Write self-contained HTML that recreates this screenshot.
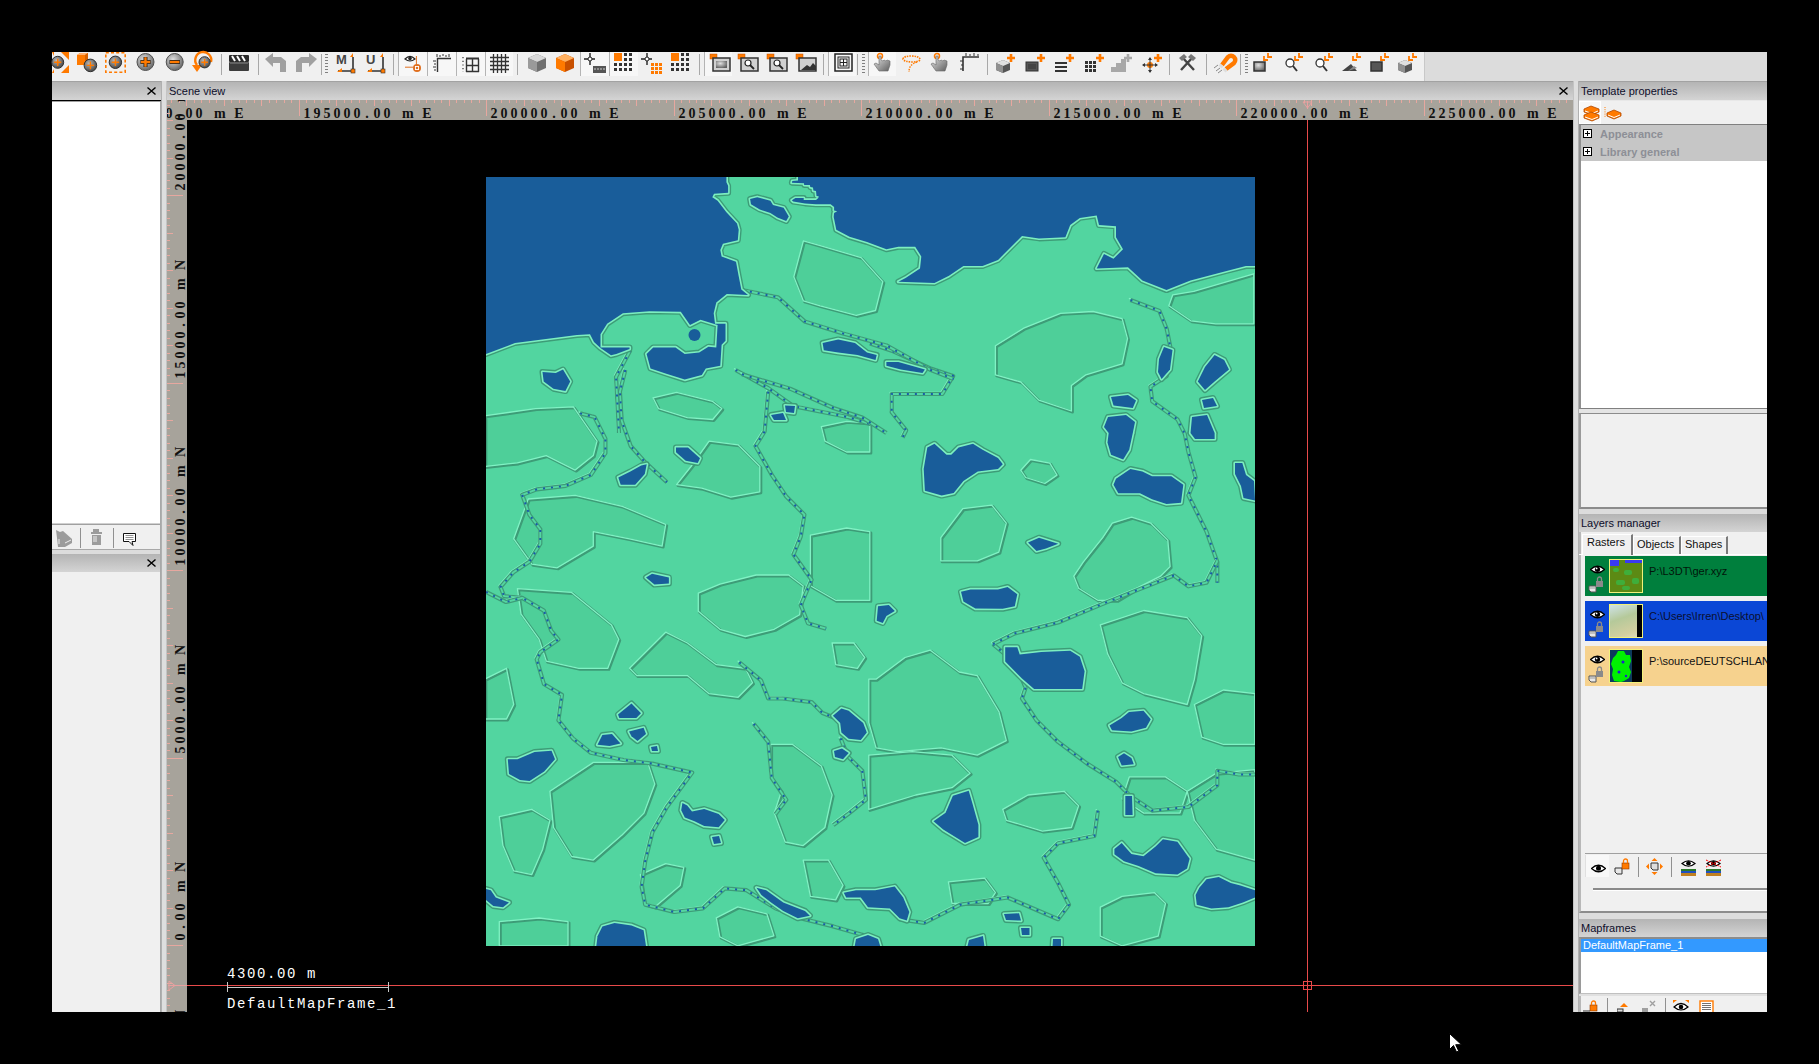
<!DOCTYPE html>
<html><head><meta charset="utf-8">
<style>
*{margin:0;padding:0;box-sizing:border-box}
html,body{width:1819px;height:1064px;background:#000;overflow:hidden;position:relative;font-family:"Liberation Sans",sans-serif;font-size:11px;color:#111}
.a{position:absolute}
.hdr{position:absolute;height:19px;background:linear-gradient(#b4b4b4,#d4d4d4);border-top:1px solid #a2a2a2}
.hdr span{position:absolute;left:2px;top:3px;font-size:11px;color:#0d0d2a;white-space:nowrap}
.x{position:absolute;width:10px;height:9px}
.rs{font-family:"Liberation Serif",serif;font-weight:bold;font-size:14px;color:#111;white-space:nowrap}
.rm{font-family:"Liberation Mono",monospace;font-weight:bold;font-size:13.5px;letter-spacing:1.9px;color:#111;white-space:nowrap}
</style></head><body>
<!-- toolbar -->
<div class="a" style="left:52px;top:52px;width:1715px;height:29px;background:#dcdcdc"></div>
<div class="a" style="left:52px;top:52px;width:1373px;height:29px;background:#f0f0f0;border-right:1px solid #c8c8c8"></div>
<svg width="0" height="0" style="position:absolute"><defs>
<radialGradient id="gc" cx="40%" cy="35%" r="70%"><stop offset="0" stop-color="#e0e0e0"/><stop offset="1" stop-color="#606060"/></radialGradient>
<radialGradient id="gd" cx="40%" cy="35%" r="70%"><stop offset="0" stop-color="#b8b8b8"/><stop offset="1" stop-color="#404040"/></radialGradient>
<linearGradient id="go" x1="0" y1="0" x2="1" y2="1"><stop offset="0" stop-color="#ffb060"/><stop offset="1" stop-color="#e06000"/></linearGradient>
<linearGradient id="gg" x1="0" y1="0" x2="1" y2="1"><stop offset="0" stop-color="#e8e8e8"/><stop offset="1" stop-color="#606060"/></linearGradient>
</defs></svg>
<div class="a" style="left:398px;top:52px;width:29px;height:24px;background:#f7f7f7;border-left:1px solid #b4b4b4"></div>
<div class="a" style="left:427px;top:52px;width:29px;height:24px;background:#f7f7f7;border-left:1px solid #b4b4b4"></div>
<div class="a" style="left:456px;top:52px;width:29px;height:24px;background:#f7f7f7;border-left:1px solid #b4b4b4"></div>
<div class="a" style="left:485px;top:52px;width:28px;height:24px;background:#f7f7f7;border-left:1px solid #b4b4b4"></div>
<div class="a" style="left:580px;top:52px;width:29px;height:24px;background:#f7f7f7;border-left:1px solid #b4b4b4"></div>
<div class="a" style="left:609px;top:52px;width:29px;height:24px;background:#f7f7f7;border-left:1px solid #b4b4b4"></div>
<div class="a" style="left:704px;top:52px;width:28px;height:24px;background:#f7f7f7;border-left:1px solid #b4b4b4"></div>
<div class="a" style="left:828px;top:52px;width:28px;height:24px;background:#f7f7f7;border-left:1px solid #b4b4b4"></div>
<div class="a" style="left:868px;top:52px;width:28px;height:24px;background:#f7f7f7;border-left:1px solid #b4b4b4"></div>
<svg class="a" style="left:52px;top:52px;overflow:visible" width="17" height="21" viewBox="0 0 17 21"><path d="M9 0h8v8z M9 21h8v-8z" fill="#ff7a00"/><path d="M0 0h2v4z M0 21h2v-4z" fill="#ff7a00"/><circle cx="5.7" cy="10.3" r="6" fill="url(#gd)" stroke="#303030" stroke-width="1"/><path d="M2.1000000000000005 10.3h7.199999999999999M5.7 6.700000000000001v7.199999999999999" stroke="#ff7a00" stroke-width="1.4"/></svg>
<svg class="a" style="left:76px;top:52px;overflow:visible" width="24" height="22" viewBox="0 0 24 22"><path d="M1 3l3-2h8v10l-3 2H1z" fill="#ff7a00"/><path d="M1 3l3-2h8l-3 2z" fill="#ffb070"/><path d="M9 3l3-2v10l-3 2z" fill="#d86000"/><circle cx="14.4" cy="13.4" r="6.3" fill="url(#gd)" stroke="#303030" stroke-width="1"/><path d="M10.620000000000001 13.4h7.56M14.4 9.620000000000001v7.56" stroke="#ff7a00" stroke-width="1.4"/></svg>
<svg class="a" style="left:105px;top:52px;overflow:visible" width="21" height="21" viewBox="0 0 21 21"><rect x="0.8" y="0.8" width="19.4" height="19.4" fill="none" stroke="#ff7a00" stroke-width="1.6" stroke-dasharray="3 2.2"/><circle cx="10.4" cy="10.3" r="6.2" fill="url(#gd)" stroke="#303030" stroke-width="1"/><path d="M6.680000000000001 10.3h7.4399999999999995M10.4 6.580000000000001v7.4399999999999995" stroke="#ff7a00" stroke-width="1.4"/></svg>
<svg class="a" style="left:136px;top:52px;overflow:visible" width="20" height="20" viewBox="0 0 20 20"><circle cx="9.5" cy="10" r="8.5" fill="url(#gc)" stroke="#505050" stroke-width="1"/><path d="M4.4 10h10.2M9.5 4.9v10.2" stroke="#202020" stroke-width="4"/><path d="M4.824999999999999 10h9.350000000000001M9.5 5.324999999999999v9.350000000000001" stroke="#ff7a00" stroke-width="2.4"/></svg>
<svg class="a" style="left:165px;top:52px;overflow:visible" width="20" height="20" viewBox="0 0 20 20"><circle cx="9.7" cy="10" r="8.5" fill="url(#gc)" stroke="#505050"/><path d="M4.5 10h10.4" stroke="#202020" stroke-width="4"/><path d="M5 10h9.4" stroke="#ff7a00" stroke-width="2.4"/></svg>
<svg class="a" style="left:191px;top:52px;overflow:visible" width="24" height="22" viewBox="0 0 24 22"><path d="M6 13 A8 8 0 1 1 20 10" fill="none" stroke="#ff7a00" stroke-width="2.4"/><path d="M1 13l5 7 5-7z" fill="#ff7a00"/><circle cx="13.6" cy="10.3" r="5.6" fill="url(#gd)" stroke="#303030" stroke-width="1"/><path d="M10.24 10.3h6.72M13.6 6.940000000000001v6.72" stroke="#ff7a00" stroke-width="1.4"/></svg>
<div class="a" style="left:221px;top:54px;width:1px;height:21px;background:#a8a8a8"></div>
<div class="a" style="left:258px;top:54px;width:1px;height:21px;background:#a8a8a8"></div>
<div class="a" style="left:321px;top:54px;width:1px;height:21px;background:#a8a8a8"></div>
<div class="a" style="left:325px;top:54px;width:3px;height:21px;background:repeating-linear-gradient(#808080 0 1px,transparent 1px 3px)"></div>
<svg class="a" style="left:228px;top:54px;overflow:visible" width="22" height="17" viewBox="0 0 22 17"><rect x="1" y="8" width="20" height="9" rx="1" fill="#3c3c3c"/><rect x="1" y="1" width="20" height="7" rx="1" fill="#2a2a2a"/><path d="M4 2l3 5M9 2l3 5M14 2l3 5" stroke="#fff" stroke-width="2"/><path d="M2 9h18" stroke="#888" stroke-width="1"/></svg>
<svg class="a" style="left:265px;top:53px;overflow:visible" width="22" height="19" viewBox="0 0 22 19"><path d="M0 6l8-6v4h8l5 4v11h-6V10H8v4z" fill="#a0a0a0"/></svg>
<svg class="a" style="left:295px;top:53px;overflow:visible" width="22" height="19" viewBox="0 0 22 19"><path d="M22 6l-8-6v4H6L1 8v11h6V10h7v4z" fill="#a0a0a0"/></svg>
<svg class="a" style="left:335px;top:53px;overflow:visible" width="22" height="20" viewBox="0 0 22 20"><text x="1" y="11" font-family="Liberation Sans" font-weight="bold" font-size="13" fill="#444">M</text><path d="M3 18h15V4" fill="none" stroke="#333" stroke-width="1.6"/><path d="M15 4l3-4v4z M2 19l5-4v4z" fill="#ff7a00"/><rect x="16" y="16" width="4" height="4" fill="#ff7a00" stroke="#333" stroke-width=".6"/></svg>
<svg class="a" style="left:365px;top:53px;overflow:visible" width="22" height="20" viewBox="0 0 22 20"><text x="1" y="11" font-family="Liberation Sans" font-weight="bold" font-size="13" fill="#444">U</text><path d="M3 18h15V4" fill="none" stroke="#333" stroke-width="1.6"/><path d="M15 4l3-4v4z M2 19l5-4v4z" fill="#ff7a00"/><rect x="16" y="16" width="4" height="4" fill="#ff7a00" stroke="#333" stroke-width=".6"/></svg>
<div class="a" style="left:393px;top:54px;width:1px;height:21px;background:#a8a8a8"></div>
<svg class="a" style="left:404px;top:54px;overflow:visible" width="18" height="19" viewBox="0 0 18 19"><path d="M1 5 Q6 0 11 5 Q6 9 1 5z" fill="#fff" stroke="#222" stroke-width="1.2"/><circle cx="6" cy="4.6" r="1.8" fill="#222"/><path d="M12.4 2v15M1 13.2h8" stroke="#e07020" stroke-width="1"/><circle cx="13" cy="14" r="4" fill="#e07020"/><path d="M11 12.5h4M11 15.5h4M11.5 12v4M14.5 12v4" stroke="#fff" stroke-width=".9"/></svg>
<svg class="a" style="left:432px;top:53px;overflow:visible" width="20" height="20" viewBox="0 0 20 20"><path d="M5.5 19V5.5H19" fill="none" stroke="#333" stroke-width="1.4"/><path d="M5 1v3M8 2v2M11 1v2M14 2v2M17 1v3M1 8h3M2 11h2M1 14h3M2 17h2" stroke="#333" stroke-width="1"/></svg>
<svg class="a" style="left:462px;top:55px;overflow:visible" width="18" height="18" viewBox="0 0 18 18"><path d="M4 3.5h13" stroke="#333" stroke-width="2"/><path d="M4.5 4v13M10.5 4v13M16.5 4v13M4 10.5h13M4 16.5h13" stroke="#333" stroke-width="1.4"/><path d="M1 2v15" stroke="#333" stroke-width="1.2" stroke-dasharray="1.2 2.5"/></svg>
<svg class="a" style="left:490px;top:54px;overflow:visible" width="19" height="19" viewBox="0 0 19 19"><path d="M0 3.5h19M0 7.5h19M0 11.5h19M0 15.5h19M3.5 0v19M7.5 0v19M11.5 0v19M15.5 0v19" stroke="#333" stroke-width="1.3"/></svg>
<div class="a" style="left:517px;top:54px;width:1px;height:21px;background:#a8a8a8"></div>
<svg class="a" style="left:527px;top:53px;overflow:visible" width="20" height="20" viewBox="0 0 20 20"><path d="M10 1l9 4v10l-9 4-9-4V5z" fill="#707070"/><path d="M10 1l9 4-9 4-9-4z" fill="#d8d8d8"/><path d="M1 5l9 4v10l-9-4z" fill="#9a9a9a"/></svg>
<svg class="a" style="left:555px;top:53px;overflow:visible" width="20" height="20" viewBox="0 0 20 20"><path d="M10 1l9 4v10l-9 4-9-4V5z" fill="#c85000"/><path d="M10 1l9 4-9 4-9-4z" fill="#ffb060"/><path d="M1 5l9 4v10l-9-4z" fill="#ff7a00"/></svg>
<svg class="a" style="left:584px;top:53px;overflow:visible" width="22" height="20" viewBox="0 0 22 20"><path d="M0 6h11M6 0v12" stroke="#222" stroke-width="1.4"/><circle cx="6" cy="6" r="2" fill="#fff" stroke="#222"/><rect x="9" y="13" width="13" height="7" fill="#555"/><path d="M10 16h11" stroke="#ccc" stroke-dasharray="2 1"/></svg>
<svg class="a" style="left:614px;top:53px;overflow:visible" width="20" height="20" viewBox="0 0 20 20"><rect x="0" y="0" width="8" height="8" fill="#ff7a00"/><rect x="10" y="0" width="3" height="3" fill="#333"/><rect x="15" y="0" width="3" height="3" fill="#333"/><rect x="10" y="5" width="3" height="3" fill="#333"/><rect x="15" y="5" width="3" height="3" fill="#333"/><rect x="0" y="10" width="3" height="3" fill="#333"/><rect x="5" y="10" width="3" height="3" fill="#333"/><rect x="10" y="10" width="3" height="3" fill="#333"/><rect x="15" y="10" width="3" height="3" fill="#333"/><rect x="0" y="15" width="3" height="3" fill="#333"/><rect x="5" y="15" width="3" height="3" fill="#333"/><rect x="10" y="15" width="3" height="3" fill="#333"/><rect x="15" y="15" width="3" height="3" fill="#333"/></svg>
<svg class="a" style="left:641px;top:53px;overflow:visible" width="21" height="21" viewBox="0 0 21 21"><path d="M0 6h11M6 0v12" stroke="#222" stroke-width="1.4"/><circle cx="6" cy="6" r="2" fill="#fff" stroke="#222"/><rect x="10" y="10" width="3" height="3" fill="#ff7a00"/><rect x="14" y="10" width="3" height="3" fill="#ff7a00"/><rect x="18" y="10" width="3" height="3" fill="#ff7a00"/><rect x="10" y="14" width="3" height="3" fill="#ff7a00"/><rect x="14" y="14" width="3" height="3" fill="#ff7a00"/><rect x="18" y="14" width="3" height="3" fill="#ff7a00"/><rect x="10" y="18" width="3" height="3" fill="#ff7a00"/><rect x="14" y="18" width="3" height="3" fill="#ff7a00"/><rect x="18" y="18" width="3" height="3" fill="#ff7a00"/></svg>
<svg class="a" style="left:671px;top:53px;overflow:visible" width="20" height="20" viewBox="0 0 20 20"><rect x="0" y="0" width="8" height="8" fill="#ff7a00"/><rect x="10" y="0" width="3" height="3" fill="#333"/><rect x="15" y="0" width="3" height="3" fill="#333"/><rect x="10" y="5" width="3" height="3" fill="#333"/><rect x="15" y="5" width="3" height="3" fill="#333"/><rect x="0" y="10" width="3" height="3" fill="#333"/><rect x="5" y="10" width="3" height="3" fill="#333"/><rect x="10" y="10" width="3" height="3" fill="#333"/><rect x="15" y="10" width="3" height="3" fill="#333"/><rect x="0" y="15" width="3" height="3" fill="#333"/><rect x="5" y="15" width="3" height="3" fill="#333"/><rect x="10" y="15" width="3" height="3" fill="#333"/><rect x="15" y="15" width="3" height="3" fill="#333"/></svg>
<div class="a" style="left:699px;top:54px;width:1px;height:21px;background:#a8a8a8"></div>
<svg class="a" style="left:709px;top:53px;overflow:visible" width="22" height="20" viewBox="0 0 22 20"><rect x="1" y="1" width="7" height="5" fill="#ff7a00" stroke="#c05000" stroke-width=".5"/><rect x="4" y="5" width="17" height="13" fill="#d0d0d0" stroke="#333" stroke-width="1.5"/><rect x="7" y="8" width="11" height="7" fill="url(#gc)"/></svg>
<svg class="a" style="left:737px;top:53px;overflow:visible" width="22" height="20" viewBox="0 0 22 20"><rect x="1" y="1" width="7" height="5" fill="#ff7a00" stroke="#c05000" stroke-width=".5"/><rect x="4" y="5" width="17" height="13" fill="#d0d0d0" stroke="#333" stroke-width="1.5"/><circle cx="11" cy="10" r="3" fill="#fff" stroke="#222" stroke-width="1.2"/><path d="M13 12l4 4" stroke="#222" stroke-width="1.8"/></svg>
<svg class="a" style="left:766px;top:53px;overflow:visible" width="22" height="20" viewBox="0 0 22 20"><rect x="1" y="1" width="7" height="5" fill="#ff7a00" stroke="#c05000" stroke-width=".5"/><rect x="4" y="5" width="17" height="13" fill="#d0d0d0" stroke="#333" stroke-width="1.5"/><circle cx="11" cy="10" r="3" fill="#fff" stroke="#222" stroke-width="1.2"/><path d="M13 12l4 4" stroke="#222" stroke-width="1.8"/></svg>
<svg class="a" style="left:795px;top:53px;overflow:visible" width="22" height="20" viewBox="0 0 22 20"><rect x="1" y="1" width="7" height="5" fill="#ff7a00" stroke="#c05000" stroke-width=".5"/><rect x="4" y="5" width="17" height="13" fill="#d0d0d0" stroke="#333" stroke-width="1.5"/><path d="M6 17l6-5 3 2 3-4 3 3v4z" fill="#333"/></svg>
<div class="a" style="left:823px;top:54px;width:1px;height:21px;background:#a8a8a8"></div>
<svg class="a" style="left:834px;top:53px;overflow:visible" width="19" height="19" viewBox="0 0 19 19"><rect x="1" y="1" width="17" height="17" fill="none" stroke="#222" stroke-width="1.5"/><rect x="4" y="4" width="11" height="11" fill="none" stroke="#222" stroke-width="1"/><rect x="6" y="6" width="7" height="7" fill="none" stroke="#222" stroke-width="1"/><path d="M9.5 6v7M6 9.5h7" stroke="#222"/></svg>
<div class="a" style="left:857px;top:54px;width:1px;height:21px;background:#a8a8a8"></div>
<div class="a" style="left:862px;top:54px;width:3px;height:21px;background:repeating-linear-gradient(#808080 0 1px,transparent 1px 3px)"></div>
<svg class="a" style="left:873px;top:53px;overflow:visible" width="20" height="20" viewBox="0 0 20 20"><circle cx="7" cy="3" r="2.5" fill="none" stroke="#ff7a00" stroke-width="1.5"/><path d="M6 3v9l-3-2-2 1 5 7h9l2-6v-4l-3-1-1 1-2-1-1 1-2-1V3z" fill="url(#gg)" stroke="#666" stroke-width=".6"/></svg>
<svg class="a" style="left:930px;top:53px;overflow:visible" width="20" height="20" viewBox="0 0 20 20"><circle cx="7" cy="3" r="2.5" fill="none" stroke="#ff7a00" stroke-width="1.5"/><path d="M6 3v9l-3-2-2 1 5 7h9l2-6v-4l-3-1-1 1-2-1-1 1-2-1V3z" fill="url(#gg)" stroke="#666" stroke-width=".6"/></svg>
<svg class="a" style="left:901px;top:53px;overflow:visible" width="21" height="20" viewBox="0 0 21 20"><path d="M2 6c0-4 16-4 17 0s-16 4-17 0z" fill="none" stroke="#ff7a00" stroke-width="1.6" stroke-dasharray="1.5 1"/><path d="M16 9c-6 2-8 5-8 10" fill="none" stroke="#ff7a00" stroke-width="1.4" stroke-dasharray="1.5 1.2"/></svg>
<svg class="a" style="left:960px;top:53px;overflow:visible" width="19" height="19" viewBox="0 0 19 19"><path d="M3 18V4h16" fill="none" stroke="#333" stroke-width="1.6"/><path d="M6 0v3M10 1v2M14 0v3M18 1v2M0 8h3M1 12h2M0 16h3" stroke="#333" stroke-width="1"/></svg>
<div class="a" style="left:987px;top:54px;width:1px;height:21px;background:#a8a8a8"></div>
<svg class="a" style="left:995px;top:53px;overflow:visible" width="22" height="20" viewBox="0 0 22 20"><path d="M8 7l7 3v7l-7 3-7-3v-7z" fill="#555"/><path d="M8 7l7 3-7 3-7-3z" fill="#e0e0e0"/><path d="M1 10l7 3v7l-7-3z" fill="#909090"/><path d="M16 1v8M12 5h8" stroke="#ff7a00" stroke-width="2.6"/></svg>
<svg class="a" style="left:1025px;top:53px;overflow:visible" width="22" height="20" viewBox="0 0 22 20"><rect x="1" y="9" width="12" height="9" fill="#555" stroke="#333"/><rect x="3" y="11" width="8" height="5" fill="#444"/><path d="M16 1v8M12 5h8" stroke="#ff7a00" stroke-width="2.6"/></svg>
<svg class="a" style="left:1054px;top:53px;overflow:visible" width="22" height="20" viewBox="0 0 22 20"><path d="M1 10h12M1 14h12M1 18h12" stroke="#333" stroke-width="1.8"/><path d="M16 1v8M12 5h8" stroke="#ff7a00" stroke-width="2.6"/></svg>
<svg class="a" style="left:1084px;top:53px;overflow:visible" width="22" height="20" viewBox="0 0 22 20"><rect x="1" y="8" width="3" height="3" fill="#333"/><rect x="5" y="8" width="3" height="3" fill="#333"/><rect x="9" y="8" width="3" height="3" fill="#333"/><rect x="1" y="12" width="3" height="3" fill="#333"/><rect x="5" y="12" width="3" height="3" fill="#333"/><rect x="9" y="12" width="3" height="3" fill="#333"/><rect x="1" y="16" width="3" height="3" fill="#333"/><rect x="5" y="16" width="3" height="3" fill="#333"/><rect x="9" y="16" width="3" height="3" fill="#333"/><path d="M16 1v8M12 5h8" stroke="#ff7a00" stroke-width="2.6"/></svg>
<svg class="a" style="left:1111px;top:53px;overflow:visible" width="22" height="20" viewBox="0 0 22 20"><path d="M0 19v-5h5v-4h5v-4h5v13z" fill="#a8a8a8"/><path d="M17 1v8M13 5h8" stroke="#a8a8a8" stroke-width="2.6"/></svg>
<svg class="a" style="left:1141px;top:53px;overflow:visible" width="22" height="21" viewBox="0 0 22 21"><circle cx="9" cy="12" r="3" fill="#ff7a00"/><path d="M9 5v14M2 12h14" stroke="#333" stroke-width="1"/><path d="M9 4l-2 3h4zM9 20l-2-3h4zM1 12l3-2v4zM17 12l-3-2v4z" fill="#333"/><path d="M17 1v8M13 5h8" stroke="#ff7a00" stroke-width="2.6"/></svg>
<div class="a" style="left:1169px;top:54px;width:1px;height:21px;background:#a8a8a8"></div>
<svg class="a" style="left:1178px;top:53px;overflow:visible" width="19" height="19" viewBox="0 0 19 19"><path d="M3 17L15 4M16 17L4 4" stroke="#444" stroke-width="2.4"/><path d="M1 5l5-4 3 3-5 4zM18 5l-5-4-3 3 5 4z" fill="#777"/></svg>
<div class="a" style="left:1206px;top:54px;width:1px;height:21px;background:#a8a8a8"></div>
<svg class="a" style="left:1213px;top:52px;overflow:visible" width="24" height="22" viewBox="0 0 24 22"><path d="M9 13l6-8a4 4 0 0 1 6 6l-8 6" fill="none" stroke="#ff7a00" stroke-width="4.5"/><path d="M9 13l-2 2M13 17l-2 2" stroke="#ddd" stroke-width="4.5"/><path d="M1 16l4-3M3 19l4-3M5 21l4-3" stroke="#888" stroke-width="1"/></svg>
<div class="a" style="left:1240px;top:54px;width:1px;height:21px;background:#a8a8a8"></div>
<div class="a" style="left:1245px;top:54px;width:3px;height:21px;background:repeating-linear-gradient(#808080 0 1px,transparent 1px 3px)"></div>
<svg class="a" style="left:1253px;top:53px;overflow:visible" width="22" height="20" viewBox="0 0 22 20"><rect x="1" y="9" width="11" height="9" fill="url(#gc)" stroke="#333" stroke-width="1.5"/><path d="M11 3v4h4M15 0v4h4" fill="none" stroke="#ff7a00" stroke-width="1.8"/></svg>
<svg class="a" style="left:1284px;top:53px;overflow:visible" width="22" height="20" viewBox="0 0 22 20"><circle cx="6" cy="10" r="4" fill="#fff" stroke="#333" stroke-width="1.3"/><path d="M9 13l4 5" stroke="#333" stroke-width="2"/><path d="M11 3v4h4M15 0v4h4" fill="none" stroke="#ff7a00" stroke-width="1.8"/></svg>
<svg class="a" style="left:1314px;top:53px;overflow:visible" width="22" height="20" viewBox="0 0 22 20"><circle cx="6" cy="10" r="4" fill="#fff" stroke="#333" stroke-width="1.3"/><path d="M9 13l4 5" stroke="#333" stroke-width="2"/><path d="M11 3v4h4M15 0v4h4" fill="none" stroke="#ff7a00" stroke-width="1.8"/></svg>
<svg class="a" style="left:1342px;top:53px;overflow:visible" width="22" height="20" viewBox="0 0 22 20"><path d="M0 18l9-7 6 7z" fill="#444"/><path d="M6 18l6-5 3 2" fill="#888"/><path d="M11 3v4h4M15 0v4h4" fill="none" stroke="#ff7a00" stroke-width="1.8"/></svg>
<svg class="a" style="left:1370px;top:53px;overflow:visible" width="22" height="20" viewBox="0 0 22 20"><rect x="1" y="9" width="11" height="9" fill="#555" stroke="#333" stroke-width="1.5"/><path d="M11 3v4h4M15 0v4h4" fill="none" stroke="#ff7a00" stroke-width="1.8"/></svg>
<svg class="a" style="left:1398px;top:53px;overflow:visible" width="22" height="20" viewBox="0 0 22 20"><path d="M7 7l7 3v7l-7 3-7-3v-7z" fill="#555"/><path d="M7 7l7 3-7 3-7-3z" fill="#e0e0e0"/><path d="M0 10l7 3v7l-7-3z" fill="#909090"/><path d="M11 3v4h4M15 0v4h4" fill="none" stroke="#ff7a00" stroke-width="1.8"/></svg>

<!-- left dock -->
<div class="hdr" style="left:52px;top:81px;width:109px"></div>
<div class="a" style="left:52px;top:101px;width:109px;height:1px;background:#a0a0a0"></div>
<div class="a" style="left:52px;top:102px;width:108px;height:421px;background:#fff"></div>
<div class="a" style="left:52px;top:523px;width:109px;height:1px;background:#d0d0d0"></div>
<div class="a" style="left:52px;top:524px;width:109px;height:1px;background:#a0a0a0"></div>
<div class="a" style="left:52px;top:525px;width:108px;height:24px;background:#f0f0f0"></div>
<div class="a" style="left:52px;top:549px;width:109px;height:1px;background:#a8a8a8"></div>
<div class="a" style="left:52px;top:550px;width:109px;height:4px;background:#dcdcdc"></div>
<div class="hdr" style="left:52px;top:554px;width:109px;height:18px;border-top:none"></div>
<div class="a" style="left:52px;top:572px;width:108px;height:440px;background:#f0f0f0"></div>
<div class="a" style="left:160px;top:102px;width:1px;height:910px;background:#a8a8a8"></div>
<!-- splitter left -->
<div class="a" style="left:161px;top:81px;width:6px;height:931px;background:#dedede;border-left:1px solid #b0b0b0;border-right:1px solid #c4c4c4"></div>

<!-- scene view -->
<div class="hdr" style="left:167px;top:81px;width:1406px"><span>Scene view</span></div>
<div class="a" style="left:167px;top:100px;width:1406px;height:20px;background:#a7a39b"></div>
<div class="a" style="left:167px;top:100px;width:20px;height:912px;background:#a7a39b"></div>
<div class="a" style="left:187px;top:120px;width:1386px;height:892px;background:#000"></div>
<div class="a" style="left:0;top:0;width:1819px;height:1064px;clip-path:inset(100px 246px 52px 167px)">
<div class="a" style="left:171px;top:100px;width:1px;height:3px;background:#e7a79f"></div>
<div class="a" style="left:179px;top:100px;width:1px;height:3px;background:#e7a79f"></div>
<div class="a" style="left:186px;top:100px;width:1px;height:6px;background:#e7a79f"></div>
<div class="a" style="left:194px;top:100px;width:1px;height:3px;background:#e7a79f"></div>
<div class="a" style="left:201px;top:100px;width:1px;height:3px;background:#e7a79f"></div>
<div class="a" style="left:209px;top:100px;width:1px;height:3px;background:#e7a79f"></div>
<div class="a" style="left:216px;top:100px;width:1px;height:3px;background:#e7a79f"></div>
<div class="a" style="left:224px;top:100px;width:1px;height:6px;background:#e7a79f"></div>
<div class="a" style="left:231px;top:100px;width:1px;height:3px;background:#e7a79f"></div>
<div class="a" style="left:239px;top:100px;width:1px;height:3px;background:#e7a79f"></div>
<div class="a" style="left:246px;top:100px;width:1px;height:3px;background:#e7a79f"></div>
<div class="a" style="left:254px;top:100px;width:1px;height:3px;background:#e7a79f"></div>
<div class="a" style="left:261px;top:100px;width:1px;height:6px;background:#e7a79f"></div>
<div class="a" style="left:269px;top:100px;width:1px;height:3px;background:#e7a79f"></div>
<div class="a" style="left:276px;top:100px;width:1px;height:3px;background:#e7a79f"></div>
<div class="a" style="left:284px;top:100px;width:1px;height:3px;background:#e7a79f"></div>
<div class="a" style="left:291px;top:100px;width:1px;height:3px;background:#e7a79f"></div>
<div class="a" style="left:299px;top:100px;width:1px;height:16px;background:#e7a79f"></div>
<div class="a" style="left:306px;top:100px;width:1px;height:3px;background:#e7a79f"></div>
<div class="a" style="left:314px;top:100px;width:1px;height:3px;background:#e7a79f"></div>
<div class="a" style="left:321px;top:100px;width:1px;height:3px;background:#e7a79f"></div>
<div class="a" style="left:329px;top:100px;width:1px;height:3px;background:#e7a79f"></div>
<div class="a" style="left:336px;top:100px;width:1px;height:6px;background:#e7a79f"></div>
<div class="a" style="left:344px;top:100px;width:1px;height:3px;background:#e7a79f"></div>
<div class="a" style="left:351px;top:100px;width:1px;height:3px;background:#e7a79f"></div>
<div class="a" style="left:359px;top:100px;width:1px;height:3px;background:#e7a79f"></div>
<div class="a" style="left:366px;top:100px;width:1px;height:3px;background:#e7a79f"></div>
<div class="a" style="left:374px;top:100px;width:1px;height:6px;background:#e7a79f"></div>
<div class="a" style="left:381px;top:100px;width:1px;height:3px;background:#e7a79f"></div>
<div class="a" style="left:389px;top:100px;width:1px;height:3px;background:#e7a79f"></div>
<div class="a" style="left:396px;top:100px;width:1px;height:3px;background:#e7a79f"></div>
<div class="a" style="left:404px;top:100px;width:1px;height:3px;background:#e7a79f"></div>
<div class="a" style="left:411px;top:100px;width:1px;height:6px;background:#e7a79f"></div>
<div class="a" style="left:419px;top:100px;width:1px;height:3px;background:#e7a79f"></div>
<div class="a" style="left:426px;top:100px;width:1px;height:3px;background:#e7a79f"></div>
<div class="a" style="left:434px;top:100px;width:1px;height:3px;background:#e7a79f"></div>
<div class="a" style="left:441px;top:100px;width:1px;height:3px;background:#e7a79f"></div>
<div class="a" style="left:449px;top:100px;width:1px;height:6px;background:#e7a79f"></div>
<div class="a" style="left:456px;top:100px;width:1px;height:3px;background:#e7a79f"></div>
<div class="a" style="left:464px;top:100px;width:1px;height:3px;background:#e7a79f"></div>
<div class="a" style="left:471px;top:100px;width:1px;height:3px;background:#e7a79f"></div>
<div class="a" style="left:479px;top:100px;width:1px;height:3px;background:#e7a79f"></div>
<div class="a" style="left:486px;top:100px;width:1px;height:16px;background:#e7a79f"></div>
<div class="a" style="left:494px;top:100px;width:1px;height:3px;background:#e7a79f"></div>
<div class="a" style="left:501px;top:100px;width:1px;height:3px;background:#e7a79f"></div>
<div class="a" style="left:509px;top:100px;width:1px;height:3px;background:#e7a79f"></div>
<div class="a" style="left:516px;top:100px;width:1px;height:3px;background:#e7a79f"></div>
<div class="a" style="left:524px;top:100px;width:1px;height:6px;background:#e7a79f"></div>
<div class="a" style="left:531px;top:100px;width:1px;height:3px;background:#e7a79f"></div>
<div class="a" style="left:539px;top:100px;width:1px;height:3px;background:#e7a79f"></div>
<div class="a" style="left:546px;top:100px;width:1px;height:3px;background:#e7a79f"></div>
<div class="a" style="left:554px;top:100px;width:1px;height:3px;background:#e7a79f"></div>
<div class="a" style="left:561px;top:100px;width:1px;height:6px;background:#e7a79f"></div>
<div class="a" style="left:569px;top:100px;width:1px;height:3px;background:#e7a79f"></div>
<div class="a" style="left:576px;top:100px;width:1px;height:3px;background:#e7a79f"></div>
<div class="a" style="left:584px;top:100px;width:1px;height:3px;background:#e7a79f"></div>
<div class="a" style="left:591px;top:100px;width:1px;height:3px;background:#e7a79f"></div>
<div class="a" style="left:599px;top:100px;width:1px;height:6px;background:#e7a79f"></div>
<div class="a" style="left:606px;top:100px;width:1px;height:3px;background:#e7a79f"></div>
<div class="a" style="left:614px;top:100px;width:1px;height:3px;background:#e7a79f"></div>
<div class="a" style="left:621px;top:100px;width:1px;height:3px;background:#e7a79f"></div>
<div class="a" style="left:629px;top:100px;width:1px;height:3px;background:#e7a79f"></div>
<div class="a" style="left:636px;top:100px;width:1px;height:6px;background:#e7a79f"></div>
<div class="a" style="left:644px;top:100px;width:1px;height:3px;background:#e7a79f"></div>
<div class="a" style="left:651px;top:100px;width:1px;height:3px;background:#e7a79f"></div>
<div class="a" style="left:659px;top:100px;width:1px;height:3px;background:#e7a79f"></div>
<div class="a" style="left:666px;top:100px;width:1px;height:3px;background:#e7a79f"></div>
<div class="a" style="left:674px;top:100px;width:1px;height:16px;background:#e7a79f"></div>
<div class="a" style="left:681px;top:100px;width:1px;height:3px;background:#e7a79f"></div>
<div class="a" style="left:689px;top:100px;width:1px;height:3px;background:#e7a79f"></div>
<div class="a" style="left:696px;top:100px;width:1px;height:3px;background:#e7a79f"></div>
<div class="a" style="left:704px;top:100px;width:1px;height:3px;background:#e7a79f"></div>
<div class="a" style="left:711px;top:100px;width:1px;height:6px;background:#e7a79f"></div>
<div class="a" style="left:719px;top:100px;width:1px;height:3px;background:#e7a79f"></div>
<div class="a" style="left:726px;top:100px;width:1px;height:3px;background:#e7a79f"></div>
<div class="a" style="left:734px;top:100px;width:1px;height:3px;background:#e7a79f"></div>
<div class="a" style="left:741px;top:100px;width:1px;height:3px;background:#e7a79f"></div>
<div class="a" style="left:749px;top:100px;width:1px;height:6px;background:#e7a79f"></div>
<div class="a" style="left:756px;top:100px;width:1px;height:3px;background:#e7a79f"></div>
<div class="a" style="left:764px;top:100px;width:1px;height:3px;background:#e7a79f"></div>
<div class="a" style="left:771px;top:100px;width:1px;height:3px;background:#e7a79f"></div>
<div class="a" style="left:779px;top:100px;width:1px;height:3px;background:#e7a79f"></div>
<div class="a" style="left:786px;top:100px;width:1px;height:6px;background:#e7a79f"></div>
<div class="a" style="left:794px;top:100px;width:1px;height:3px;background:#e7a79f"></div>
<div class="a" style="left:801px;top:100px;width:1px;height:3px;background:#e7a79f"></div>
<div class="a" style="left:809px;top:100px;width:1px;height:3px;background:#e7a79f"></div>
<div class="a" style="left:816px;top:100px;width:1px;height:3px;background:#e7a79f"></div>
<div class="a" style="left:824px;top:100px;width:1px;height:6px;background:#e7a79f"></div>
<div class="a" style="left:831px;top:100px;width:1px;height:3px;background:#e7a79f"></div>
<div class="a" style="left:839px;top:100px;width:1px;height:3px;background:#e7a79f"></div>
<div class="a" style="left:846px;top:100px;width:1px;height:3px;background:#e7a79f"></div>
<div class="a" style="left:854px;top:100px;width:1px;height:3px;background:#e7a79f"></div>
<div class="a" style="left:861px;top:100px;width:1px;height:16px;background:#e7a79f"></div>
<div class="a" style="left:869px;top:100px;width:1px;height:3px;background:#e7a79f"></div>
<div class="a" style="left:876px;top:100px;width:1px;height:3px;background:#e7a79f"></div>
<div class="a" style="left:884px;top:100px;width:1px;height:3px;background:#e7a79f"></div>
<div class="a" style="left:891px;top:100px;width:1px;height:3px;background:#e7a79f"></div>
<div class="a" style="left:899px;top:100px;width:1px;height:6px;background:#e7a79f"></div>
<div class="a" style="left:906px;top:100px;width:1px;height:3px;background:#e7a79f"></div>
<div class="a" style="left:914px;top:100px;width:1px;height:3px;background:#e7a79f"></div>
<div class="a" style="left:921px;top:100px;width:1px;height:3px;background:#e7a79f"></div>
<div class="a" style="left:929px;top:100px;width:1px;height:3px;background:#e7a79f"></div>
<div class="a" style="left:936px;top:100px;width:1px;height:6px;background:#e7a79f"></div>
<div class="a" style="left:944px;top:100px;width:1px;height:3px;background:#e7a79f"></div>
<div class="a" style="left:951px;top:100px;width:1px;height:3px;background:#e7a79f"></div>
<div class="a" style="left:959px;top:100px;width:1px;height:3px;background:#e7a79f"></div>
<div class="a" style="left:966px;top:100px;width:1px;height:3px;background:#e7a79f"></div>
<div class="a" style="left:974px;top:100px;width:1px;height:6px;background:#e7a79f"></div>
<div class="a" style="left:981px;top:100px;width:1px;height:3px;background:#e7a79f"></div>
<div class="a" style="left:989px;top:100px;width:1px;height:3px;background:#e7a79f"></div>
<div class="a" style="left:996px;top:100px;width:1px;height:3px;background:#e7a79f"></div>
<div class="a" style="left:1004px;top:100px;width:1px;height:3px;background:#e7a79f"></div>
<div class="a" style="left:1011px;top:100px;width:1px;height:6px;background:#e7a79f"></div>
<div class="a" style="left:1019px;top:100px;width:1px;height:3px;background:#e7a79f"></div>
<div class="a" style="left:1026px;top:100px;width:1px;height:3px;background:#e7a79f"></div>
<div class="a" style="left:1034px;top:100px;width:1px;height:3px;background:#e7a79f"></div>
<div class="a" style="left:1041px;top:100px;width:1px;height:3px;background:#e7a79f"></div>
<div class="a" style="left:1049px;top:100px;width:1px;height:16px;background:#e7a79f"></div>
<div class="a" style="left:1056px;top:100px;width:1px;height:3px;background:#e7a79f"></div>
<div class="a" style="left:1064px;top:100px;width:1px;height:3px;background:#e7a79f"></div>
<div class="a" style="left:1071px;top:100px;width:1px;height:3px;background:#e7a79f"></div>
<div class="a" style="left:1079px;top:100px;width:1px;height:3px;background:#e7a79f"></div>
<div class="a" style="left:1086px;top:100px;width:1px;height:6px;background:#e7a79f"></div>
<div class="a" style="left:1094px;top:100px;width:1px;height:3px;background:#e7a79f"></div>
<div class="a" style="left:1101px;top:100px;width:1px;height:3px;background:#e7a79f"></div>
<div class="a" style="left:1109px;top:100px;width:1px;height:3px;background:#e7a79f"></div>
<div class="a" style="left:1116px;top:100px;width:1px;height:3px;background:#e7a79f"></div>
<div class="a" style="left:1124px;top:100px;width:1px;height:6px;background:#e7a79f"></div>
<div class="a" style="left:1131px;top:100px;width:1px;height:3px;background:#e7a79f"></div>
<div class="a" style="left:1139px;top:100px;width:1px;height:3px;background:#e7a79f"></div>
<div class="a" style="left:1146px;top:100px;width:1px;height:3px;background:#e7a79f"></div>
<div class="a" style="left:1154px;top:100px;width:1px;height:3px;background:#e7a79f"></div>
<div class="a" style="left:1161px;top:100px;width:1px;height:6px;background:#e7a79f"></div>
<div class="a" style="left:1169px;top:100px;width:1px;height:3px;background:#e7a79f"></div>
<div class="a" style="left:1176px;top:100px;width:1px;height:3px;background:#e7a79f"></div>
<div class="a" style="left:1184px;top:100px;width:1px;height:3px;background:#e7a79f"></div>
<div class="a" style="left:1191px;top:100px;width:1px;height:3px;background:#e7a79f"></div>
<div class="a" style="left:1199px;top:100px;width:1px;height:6px;background:#e7a79f"></div>
<div class="a" style="left:1206px;top:100px;width:1px;height:3px;background:#e7a79f"></div>
<div class="a" style="left:1214px;top:100px;width:1px;height:3px;background:#e7a79f"></div>
<div class="a" style="left:1221px;top:100px;width:1px;height:3px;background:#e7a79f"></div>
<div class="a" style="left:1229px;top:100px;width:1px;height:3px;background:#e7a79f"></div>
<div class="a" style="left:1236px;top:100px;width:1px;height:16px;background:#e7a79f"></div>
<div class="a" style="left:1244px;top:100px;width:1px;height:3px;background:#e7a79f"></div>
<div class="a" style="left:1251px;top:100px;width:1px;height:3px;background:#e7a79f"></div>
<div class="a" style="left:1259px;top:100px;width:1px;height:3px;background:#e7a79f"></div>
<div class="a" style="left:1266px;top:100px;width:1px;height:3px;background:#e7a79f"></div>
<div class="a" style="left:1274px;top:100px;width:1px;height:6px;background:#e7a79f"></div>
<div class="a" style="left:1281px;top:100px;width:1px;height:3px;background:#e7a79f"></div>
<div class="a" style="left:1289px;top:100px;width:1px;height:3px;background:#e7a79f"></div>
<div class="a" style="left:1296px;top:100px;width:1px;height:3px;background:#e7a79f"></div>
<div class="a" style="left:1304px;top:100px;width:1px;height:3px;background:#e7a79f"></div>
<div class="a" style="left:1311px;top:100px;width:1px;height:6px;background:#e7a79f"></div>
<div class="a" style="left:1319px;top:100px;width:1px;height:3px;background:#e7a79f"></div>
<div class="a" style="left:1326px;top:100px;width:1px;height:3px;background:#e7a79f"></div>
<div class="a" style="left:1334px;top:100px;width:1px;height:3px;background:#e7a79f"></div>
<div class="a" style="left:1341px;top:100px;width:1px;height:3px;background:#e7a79f"></div>
<div class="a" style="left:1349px;top:100px;width:1px;height:6px;background:#e7a79f"></div>
<div class="a" style="left:1356px;top:100px;width:1px;height:3px;background:#e7a79f"></div>
<div class="a" style="left:1364px;top:100px;width:1px;height:3px;background:#e7a79f"></div>
<div class="a" style="left:1371px;top:100px;width:1px;height:3px;background:#e7a79f"></div>
<div class="a" style="left:1379px;top:100px;width:1px;height:3px;background:#e7a79f"></div>
<div class="a" style="left:1386px;top:100px;width:1px;height:6px;background:#e7a79f"></div>
<div class="a" style="left:1394px;top:100px;width:1px;height:3px;background:#e7a79f"></div>
<div class="a" style="left:1401px;top:100px;width:1px;height:3px;background:#e7a79f"></div>
<div class="a" style="left:1409px;top:100px;width:1px;height:3px;background:#e7a79f"></div>
<div class="a" style="left:1416px;top:100px;width:1px;height:3px;background:#e7a79f"></div>
<div class="a" style="left:1424px;top:100px;width:1px;height:16px;background:#e7a79f"></div>
<div class="a" style="left:1431px;top:100px;width:1px;height:3px;background:#e7a79f"></div>
<div class="a" style="left:1439px;top:100px;width:1px;height:3px;background:#e7a79f"></div>
<div class="a" style="left:1446px;top:100px;width:1px;height:3px;background:#e7a79f"></div>
<div class="a" style="left:1454px;top:100px;width:1px;height:3px;background:#e7a79f"></div>
<div class="a" style="left:1461px;top:100px;width:1px;height:6px;background:#e7a79f"></div>
<div class="a" style="left:1469px;top:100px;width:1px;height:3px;background:#e7a79f"></div>
<div class="a" style="left:1476px;top:100px;width:1px;height:3px;background:#e7a79f"></div>
<div class="a" style="left:1484px;top:100px;width:1px;height:3px;background:#e7a79f"></div>
<div class="a" style="left:1491px;top:100px;width:1px;height:3px;background:#e7a79f"></div>
<div class="a" style="left:1499px;top:100px;width:1px;height:6px;background:#e7a79f"></div>
<div class="a" style="left:1506px;top:100px;width:1px;height:3px;background:#e7a79f"></div>
<div class="a" style="left:1514px;top:100px;width:1px;height:3px;background:#e7a79f"></div>
<div class="a" style="left:1521px;top:100px;width:1px;height:3px;background:#e7a79f"></div>
<div class="a" style="left:1529px;top:100px;width:1px;height:3px;background:#e7a79f"></div>
<div class="a" style="left:1536px;top:100px;width:1px;height:6px;background:#e7a79f"></div>
<div class="a" style="left:1544px;top:100px;width:1px;height:3px;background:#e7a79f"></div>
<div class="a" style="left:1551px;top:100px;width:1px;height:3px;background:#e7a79f"></div>
<div class="a" style="left:1559px;top:100px;width:1px;height:3px;background:#e7a79f"></div>
<div class="a" style="left:1566px;top:100px;width:1px;height:3px;background:#e7a79f"></div>
<div class="a rs" style="left:114px;top:106px;height:16px;line-height:16px;width:130px"><span style="position:absolute;left:0px;top:0;width:10px;text-align:center">1</span><span style="position:absolute;left:10px;top:0;width:10px;text-align:center">9</span><span style="position:absolute;left:20px;top:0;width:10px;text-align:center">0</span><span style="position:absolute;left:30px;top:0;width:10px;text-align:center">0</span><span style="position:absolute;left:40px;top:0;width:10px;text-align:center">0</span><span style="position:absolute;left:50px;top:0;width:10px;text-align:center">0</span><span style="position:absolute;left:60px;top:0;width:10px;text-align:center">.</span><span style="position:absolute;left:70px;top:0;width:10px;text-align:center">0</span><span style="position:absolute;left:80px;top:0;width:10px;text-align:center">0</span><span style="position:absolute;left:90px;top:0;width:10px;text-align:center">&nbsp;</span><span style="position:absolute;left:100px;top:0;width:10px;text-align:center">m</span><span style="position:absolute;left:110px;top:0;width:10px;text-align:center">&nbsp;</span><span style="position:absolute;left:120px;top:0;width:10px;text-align:center">E</span></div>
<div class="a rs" style="left:302px;top:106px;height:16px;line-height:16px;width:130px"><span style="position:absolute;left:0px;top:0;width:10px;text-align:center">1</span><span style="position:absolute;left:10px;top:0;width:10px;text-align:center">9</span><span style="position:absolute;left:20px;top:0;width:10px;text-align:center">5</span><span style="position:absolute;left:30px;top:0;width:10px;text-align:center">0</span><span style="position:absolute;left:40px;top:0;width:10px;text-align:center">0</span><span style="position:absolute;left:50px;top:0;width:10px;text-align:center">0</span><span style="position:absolute;left:60px;top:0;width:10px;text-align:center">.</span><span style="position:absolute;left:70px;top:0;width:10px;text-align:center">0</span><span style="position:absolute;left:80px;top:0;width:10px;text-align:center">0</span><span style="position:absolute;left:90px;top:0;width:10px;text-align:center">&nbsp;</span><span style="position:absolute;left:100px;top:0;width:10px;text-align:center">m</span><span style="position:absolute;left:110px;top:0;width:10px;text-align:center">&nbsp;</span><span style="position:absolute;left:120px;top:0;width:10px;text-align:center">E</span></div>
<div class="a rs" style="left:489px;top:106px;height:16px;line-height:16px;width:130px"><span style="position:absolute;left:0px;top:0;width:10px;text-align:center">2</span><span style="position:absolute;left:10px;top:0;width:10px;text-align:center">0</span><span style="position:absolute;left:20px;top:0;width:10px;text-align:center">0</span><span style="position:absolute;left:30px;top:0;width:10px;text-align:center">0</span><span style="position:absolute;left:40px;top:0;width:10px;text-align:center">0</span><span style="position:absolute;left:50px;top:0;width:10px;text-align:center">0</span><span style="position:absolute;left:60px;top:0;width:10px;text-align:center">.</span><span style="position:absolute;left:70px;top:0;width:10px;text-align:center">0</span><span style="position:absolute;left:80px;top:0;width:10px;text-align:center">0</span><span style="position:absolute;left:90px;top:0;width:10px;text-align:center">&nbsp;</span><span style="position:absolute;left:100px;top:0;width:10px;text-align:center">m</span><span style="position:absolute;left:110px;top:0;width:10px;text-align:center">&nbsp;</span><span style="position:absolute;left:120px;top:0;width:10px;text-align:center">E</span></div>
<div class="a rs" style="left:677px;top:106px;height:16px;line-height:16px;width:130px"><span style="position:absolute;left:0px;top:0;width:10px;text-align:center">2</span><span style="position:absolute;left:10px;top:0;width:10px;text-align:center">0</span><span style="position:absolute;left:20px;top:0;width:10px;text-align:center">5</span><span style="position:absolute;left:30px;top:0;width:10px;text-align:center">0</span><span style="position:absolute;left:40px;top:0;width:10px;text-align:center">0</span><span style="position:absolute;left:50px;top:0;width:10px;text-align:center">0</span><span style="position:absolute;left:60px;top:0;width:10px;text-align:center">.</span><span style="position:absolute;left:70px;top:0;width:10px;text-align:center">0</span><span style="position:absolute;left:80px;top:0;width:10px;text-align:center">0</span><span style="position:absolute;left:90px;top:0;width:10px;text-align:center">&nbsp;</span><span style="position:absolute;left:100px;top:0;width:10px;text-align:center">m</span><span style="position:absolute;left:110px;top:0;width:10px;text-align:center">&nbsp;</span><span style="position:absolute;left:120px;top:0;width:10px;text-align:center">E</span></div>
<div class="a rs" style="left:864px;top:106px;height:16px;line-height:16px;width:130px"><span style="position:absolute;left:0px;top:0;width:10px;text-align:center">2</span><span style="position:absolute;left:10px;top:0;width:10px;text-align:center">1</span><span style="position:absolute;left:20px;top:0;width:10px;text-align:center">0</span><span style="position:absolute;left:30px;top:0;width:10px;text-align:center">0</span><span style="position:absolute;left:40px;top:0;width:10px;text-align:center">0</span><span style="position:absolute;left:50px;top:0;width:10px;text-align:center">0</span><span style="position:absolute;left:60px;top:0;width:10px;text-align:center">.</span><span style="position:absolute;left:70px;top:0;width:10px;text-align:center">0</span><span style="position:absolute;left:80px;top:0;width:10px;text-align:center">0</span><span style="position:absolute;left:90px;top:0;width:10px;text-align:center">&nbsp;</span><span style="position:absolute;left:100px;top:0;width:10px;text-align:center">m</span><span style="position:absolute;left:110px;top:0;width:10px;text-align:center">&nbsp;</span><span style="position:absolute;left:120px;top:0;width:10px;text-align:center">E</span></div>
<div class="a rs" style="left:1052px;top:106px;height:16px;line-height:16px;width:130px"><span style="position:absolute;left:0px;top:0;width:10px;text-align:center">2</span><span style="position:absolute;left:10px;top:0;width:10px;text-align:center">1</span><span style="position:absolute;left:20px;top:0;width:10px;text-align:center">5</span><span style="position:absolute;left:30px;top:0;width:10px;text-align:center">0</span><span style="position:absolute;left:40px;top:0;width:10px;text-align:center">0</span><span style="position:absolute;left:50px;top:0;width:10px;text-align:center">0</span><span style="position:absolute;left:60px;top:0;width:10px;text-align:center">.</span><span style="position:absolute;left:70px;top:0;width:10px;text-align:center">0</span><span style="position:absolute;left:80px;top:0;width:10px;text-align:center">0</span><span style="position:absolute;left:90px;top:0;width:10px;text-align:center">&nbsp;</span><span style="position:absolute;left:100px;top:0;width:10px;text-align:center">m</span><span style="position:absolute;left:110px;top:0;width:10px;text-align:center">&nbsp;</span><span style="position:absolute;left:120px;top:0;width:10px;text-align:center">E</span></div>
<div class="a rs" style="left:1239px;top:106px;height:16px;line-height:16px;width:130px"><span style="position:absolute;left:0px;top:0;width:10px;text-align:center">2</span><span style="position:absolute;left:10px;top:0;width:10px;text-align:center">2</span><span style="position:absolute;left:20px;top:0;width:10px;text-align:center">0</span><span style="position:absolute;left:30px;top:0;width:10px;text-align:center">0</span><span style="position:absolute;left:40px;top:0;width:10px;text-align:center">0</span><span style="position:absolute;left:50px;top:0;width:10px;text-align:center">0</span><span style="position:absolute;left:60px;top:0;width:10px;text-align:center">.</span><span style="position:absolute;left:70px;top:0;width:10px;text-align:center">0</span><span style="position:absolute;left:80px;top:0;width:10px;text-align:center">0</span><span style="position:absolute;left:90px;top:0;width:10px;text-align:center">&nbsp;</span><span style="position:absolute;left:100px;top:0;width:10px;text-align:center">m</span><span style="position:absolute;left:110px;top:0;width:10px;text-align:center">&nbsp;</span><span style="position:absolute;left:120px;top:0;width:10px;text-align:center">E</span></div>
<div class="a rs" style="left:1427px;top:106px;height:16px;line-height:16px;width:130px"><span style="position:absolute;left:0px;top:0;width:10px;text-align:center">2</span><span style="position:absolute;left:10px;top:0;width:10px;text-align:center">2</span><span style="position:absolute;left:20px;top:0;width:10px;text-align:center">5</span><span style="position:absolute;left:30px;top:0;width:10px;text-align:center">0</span><span style="position:absolute;left:40px;top:0;width:10px;text-align:center">0</span><span style="position:absolute;left:50px;top:0;width:10px;text-align:center">0</span><span style="position:absolute;left:60px;top:0;width:10px;text-align:center">.</span><span style="position:absolute;left:70px;top:0;width:10px;text-align:center">0</span><span style="position:absolute;left:80px;top:0;width:10px;text-align:center">0</span><span style="position:absolute;left:90px;top:0;width:10px;text-align:center">&nbsp;</span><span style="position:absolute;left:100px;top:0;width:10px;text-align:center">m</span><span style="position:absolute;left:110px;top:0;width:10px;text-align:center">&nbsp;</span><span style="position:absolute;left:120px;top:0;width:10px;text-align:center">E</span></div>
<div class="a" style="left:167px;top:1005px;width:3px;height:1px;background:#e7a79f"></div>
<div class="a" style="left:167px;top:998px;width:3px;height:1px;background:#e7a79f"></div>
<div class="a" style="left:167px;top:990px;width:3px;height:1px;background:#e7a79f"></div>
<div class="a" style="left:167px;top:983px;width:6px;height:1px;background:#e7a79f"></div>
<div class="a" style="left:167px;top:975px;width:3px;height:1px;background:#e7a79f"></div>
<div class="a" style="left:167px;top:968px;width:3px;height:1px;background:#e7a79f"></div>
<div class="a" style="left:167px;top:960px;width:3px;height:1px;background:#e7a79f"></div>
<div class="a" style="left:167px;top:953px;width:3px;height:1px;background:#e7a79f"></div>
<div class="a" style="left:167px;top:945px;width:16px;height:1px;background:#e7a79f"></div>
<div class="a" style="left:167px;top:938px;width:3px;height:1px;background:#e7a79f"></div>
<div class="a" style="left:167px;top:930px;width:3px;height:1px;background:#e7a79f"></div>
<div class="a" style="left:167px;top:923px;width:3px;height:1px;background:#e7a79f"></div>
<div class="a" style="left:167px;top:915px;width:3px;height:1px;background:#e7a79f"></div>
<div class="a" style="left:167px;top:908px;width:6px;height:1px;background:#e7a79f"></div>
<div class="a" style="left:167px;top:900px;width:3px;height:1px;background:#e7a79f"></div>
<div class="a" style="left:167px;top:893px;width:3px;height:1px;background:#e7a79f"></div>
<div class="a" style="left:167px;top:885px;width:3px;height:1px;background:#e7a79f"></div>
<div class="a" style="left:167px;top:878px;width:3px;height:1px;background:#e7a79f"></div>
<div class="a" style="left:167px;top:870px;width:6px;height:1px;background:#e7a79f"></div>
<div class="a" style="left:167px;top:863px;width:3px;height:1px;background:#e7a79f"></div>
<div class="a" style="left:167px;top:855px;width:3px;height:1px;background:#e7a79f"></div>
<div class="a" style="left:167px;top:848px;width:3px;height:1px;background:#e7a79f"></div>
<div class="a" style="left:167px;top:840px;width:3px;height:1px;background:#e7a79f"></div>
<div class="a" style="left:167px;top:833px;width:6px;height:1px;background:#e7a79f"></div>
<div class="a" style="left:167px;top:825px;width:3px;height:1px;background:#e7a79f"></div>
<div class="a" style="left:167px;top:818px;width:3px;height:1px;background:#e7a79f"></div>
<div class="a" style="left:167px;top:810px;width:3px;height:1px;background:#e7a79f"></div>
<div class="a" style="left:167px;top:803px;width:3px;height:1px;background:#e7a79f"></div>
<div class="a" style="left:167px;top:795px;width:6px;height:1px;background:#e7a79f"></div>
<div class="a" style="left:167px;top:788px;width:3px;height:1px;background:#e7a79f"></div>
<div class="a" style="left:167px;top:780px;width:3px;height:1px;background:#e7a79f"></div>
<div class="a" style="left:167px;top:773px;width:3px;height:1px;background:#e7a79f"></div>
<div class="a" style="left:167px;top:765px;width:3px;height:1px;background:#e7a79f"></div>
<div class="a" style="left:167px;top:758px;width:16px;height:1px;background:#e7a79f"></div>
<div class="a" style="left:167px;top:750px;width:3px;height:1px;background:#e7a79f"></div>
<div class="a" style="left:167px;top:743px;width:3px;height:1px;background:#e7a79f"></div>
<div class="a" style="left:167px;top:735px;width:3px;height:1px;background:#e7a79f"></div>
<div class="a" style="left:167px;top:728px;width:3px;height:1px;background:#e7a79f"></div>
<div class="a" style="left:167px;top:720px;width:6px;height:1px;background:#e7a79f"></div>
<div class="a" style="left:167px;top:713px;width:3px;height:1px;background:#e7a79f"></div>
<div class="a" style="left:167px;top:705px;width:3px;height:1px;background:#e7a79f"></div>
<div class="a" style="left:167px;top:698px;width:3px;height:1px;background:#e7a79f"></div>
<div class="a" style="left:167px;top:690px;width:3px;height:1px;background:#e7a79f"></div>
<div class="a" style="left:167px;top:683px;width:6px;height:1px;background:#e7a79f"></div>
<div class="a" style="left:167px;top:675px;width:3px;height:1px;background:#e7a79f"></div>
<div class="a" style="left:167px;top:668px;width:3px;height:1px;background:#e7a79f"></div>
<div class="a" style="left:167px;top:660px;width:3px;height:1px;background:#e7a79f"></div>
<div class="a" style="left:167px;top:653px;width:3px;height:1px;background:#e7a79f"></div>
<div class="a" style="left:167px;top:645px;width:6px;height:1px;background:#e7a79f"></div>
<div class="a" style="left:167px;top:638px;width:3px;height:1px;background:#e7a79f"></div>
<div class="a" style="left:167px;top:630px;width:3px;height:1px;background:#e7a79f"></div>
<div class="a" style="left:167px;top:623px;width:3px;height:1px;background:#e7a79f"></div>
<div class="a" style="left:167px;top:615px;width:3px;height:1px;background:#e7a79f"></div>
<div class="a" style="left:167px;top:608px;width:6px;height:1px;background:#e7a79f"></div>
<div class="a" style="left:167px;top:600px;width:3px;height:1px;background:#e7a79f"></div>
<div class="a" style="left:167px;top:593px;width:3px;height:1px;background:#e7a79f"></div>
<div class="a" style="left:167px;top:585px;width:3px;height:1px;background:#e7a79f"></div>
<div class="a" style="left:167px;top:578px;width:3px;height:1px;background:#e7a79f"></div>
<div class="a" style="left:167px;top:570px;width:16px;height:1px;background:#e7a79f"></div>
<div class="a" style="left:167px;top:563px;width:3px;height:1px;background:#e7a79f"></div>
<div class="a" style="left:167px;top:555px;width:3px;height:1px;background:#e7a79f"></div>
<div class="a" style="left:167px;top:548px;width:3px;height:1px;background:#e7a79f"></div>
<div class="a" style="left:167px;top:540px;width:3px;height:1px;background:#e7a79f"></div>
<div class="a" style="left:167px;top:533px;width:6px;height:1px;background:#e7a79f"></div>
<div class="a" style="left:167px;top:525px;width:3px;height:1px;background:#e7a79f"></div>
<div class="a" style="left:167px;top:518px;width:3px;height:1px;background:#e7a79f"></div>
<div class="a" style="left:167px;top:510px;width:3px;height:1px;background:#e7a79f"></div>
<div class="a" style="left:167px;top:503px;width:3px;height:1px;background:#e7a79f"></div>
<div class="a" style="left:167px;top:495px;width:6px;height:1px;background:#e7a79f"></div>
<div class="a" style="left:167px;top:488px;width:3px;height:1px;background:#e7a79f"></div>
<div class="a" style="left:167px;top:480px;width:3px;height:1px;background:#e7a79f"></div>
<div class="a" style="left:167px;top:473px;width:3px;height:1px;background:#e7a79f"></div>
<div class="a" style="left:167px;top:465px;width:3px;height:1px;background:#e7a79f"></div>
<div class="a" style="left:167px;top:458px;width:6px;height:1px;background:#e7a79f"></div>
<div class="a" style="left:167px;top:450px;width:3px;height:1px;background:#e7a79f"></div>
<div class="a" style="left:167px;top:443px;width:3px;height:1px;background:#e7a79f"></div>
<div class="a" style="left:167px;top:435px;width:3px;height:1px;background:#e7a79f"></div>
<div class="a" style="left:167px;top:428px;width:3px;height:1px;background:#e7a79f"></div>
<div class="a" style="left:167px;top:420px;width:6px;height:1px;background:#e7a79f"></div>
<div class="a" style="left:167px;top:413px;width:3px;height:1px;background:#e7a79f"></div>
<div class="a" style="left:167px;top:405px;width:3px;height:1px;background:#e7a79f"></div>
<div class="a" style="left:167px;top:398px;width:3px;height:1px;background:#e7a79f"></div>
<div class="a" style="left:167px;top:390px;width:3px;height:1px;background:#e7a79f"></div>
<div class="a" style="left:167px;top:383px;width:16px;height:1px;background:#e7a79f"></div>
<div class="a" style="left:167px;top:375px;width:3px;height:1px;background:#e7a79f"></div>
<div class="a" style="left:167px;top:368px;width:3px;height:1px;background:#e7a79f"></div>
<div class="a" style="left:167px;top:360px;width:3px;height:1px;background:#e7a79f"></div>
<div class="a" style="left:167px;top:353px;width:3px;height:1px;background:#e7a79f"></div>
<div class="a" style="left:167px;top:345px;width:6px;height:1px;background:#e7a79f"></div>
<div class="a" style="left:167px;top:338px;width:3px;height:1px;background:#e7a79f"></div>
<div class="a" style="left:167px;top:330px;width:3px;height:1px;background:#e7a79f"></div>
<div class="a" style="left:167px;top:323px;width:3px;height:1px;background:#e7a79f"></div>
<div class="a" style="left:167px;top:315px;width:3px;height:1px;background:#e7a79f"></div>
<div class="a" style="left:167px;top:308px;width:6px;height:1px;background:#e7a79f"></div>
<div class="a" style="left:167px;top:300px;width:3px;height:1px;background:#e7a79f"></div>
<div class="a" style="left:167px;top:293px;width:3px;height:1px;background:#e7a79f"></div>
<div class="a" style="left:167px;top:285px;width:3px;height:1px;background:#e7a79f"></div>
<div class="a" style="left:167px;top:278px;width:3px;height:1px;background:#e7a79f"></div>
<div class="a" style="left:167px;top:270px;width:6px;height:1px;background:#e7a79f"></div>
<div class="a" style="left:167px;top:263px;width:3px;height:1px;background:#e7a79f"></div>
<div class="a" style="left:167px;top:255px;width:3px;height:1px;background:#e7a79f"></div>
<div class="a" style="left:167px;top:248px;width:3px;height:1px;background:#e7a79f"></div>
<div class="a" style="left:167px;top:240px;width:3px;height:1px;background:#e7a79f"></div>
<div class="a" style="left:167px;top:233px;width:6px;height:1px;background:#e7a79f"></div>
<div class="a" style="left:167px;top:225px;width:3px;height:1px;background:#e7a79f"></div>
<div class="a" style="left:167px;top:218px;width:3px;height:1px;background:#e7a79f"></div>
<div class="a" style="left:167px;top:210px;width:3px;height:1px;background:#e7a79f"></div>
<div class="a" style="left:167px;top:203px;width:3px;height:1px;background:#e7a79f"></div>
<div class="a" style="left:167px;top:195px;width:16px;height:1px;background:#e7a79f"></div>
<div class="a" style="left:167px;top:188px;width:3px;height:1px;background:#e7a79f"></div>
<div class="a" style="left:167px;top:180px;width:3px;height:1px;background:#e7a79f"></div>
<div class="a" style="left:167px;top:173px;width:3px;height:1px;background:#e7a79f"></div>
<div class="a" style="left:167px;top:165px;width:3px;height:1px;background:#e7a79f"></div>
<div class="a" style="left:167px;top:158px;width:6px;height:1px;background:#e7a79f"></div>
<div class="a" style="left:167px;top:150px;width:3px;height:1px;background:#e7a79f"></div>
<div class="a" style="left:167px;top:143px;width:3px;height:1px;background:#e7a79f"></div>
<div class="a" style="left:167px;top:135px;width:3px;height:1px;background:#e7a79f"></div>
<div class="a" style="left:167px;top:128px;width:3px;height:1px;background:#e7a79f"></div>
<div class="a" style="left:167px;top:120px;width:6px;height:1px;background:#e7a79f"></div>
<div class="a" style="left:167px;top:113px;width:3px;height:1px;background:#e7a79f"></div>
<div class="a" style="left:167px;top:105px;width:3px;height:1px;background:#e7a79f"></div>
<div class="a rs" style="left:173px;top:1130px;height:16px;line-height:16px;width:130px;transform-origin:0 0;transform:rotate(-90deg)"><span style="position:absolute;left:0px;top:0;width:10px;text-align:center">-</span><span style="position:absolute;left:10px;top:0;width:10px;text-align:center">5</span><span style="position:absolute;left:20px;top:0;width:10px;text-align:center">0</span><span style="position:absolute;left:30px;top:0;width:10px;text-align:center">0</span><span style="position:absolute;left:40px;top:0;width:10px;text-align:center">0</span><span style="position:absolute;left:50px;top:0;width:10px;text-align:center">.</span><span style="position:absolute;left:60px;top:0;width:10px;text-align:center">0</span><span style="position:absolute;left:70px;top:0;width:10px;text-align:center">0</span><span style="position:absolute;left:80px;top:0;width:10px;text-align:center">&nbsp;</span><span style="position:absolute;left:90px;top:0;width:10px;text-align:center">m</span><span style="position:absolute;left:100px;top:0;width:10px;text-align:center">&nbsp;</span><span style="position:absolute;left:110px;top:0;width:10px;text-align:center">N</span></div>
<div class="a rs" style="left:173px;top:942px;height:16px;line-height:16px;width:130px;transform-origin:0 0;transform:rotate(-90deg)"><span style="position:absolute;left:0px;top:0;width:10px;text-align:center">0</span><span style="position:absolute;left:10px;top:0;width:10px;text-align:center">.</span><span style="position:absolute;left:20px;top:0;width:10px;text-align:center">0</span><span style="position:absolute;left:30px;top:0;width:10px;text-align:center">0</span><span style="position:absolute;left:40px;top:0;width:10px;text-align:center">&nbsp;</span><span style="position:absolute;left:50px;top:0;width:10px;text-align:center">m</span><span style="position:absolute;left:60px;top:0;width:10px;text-align:center">&nbsp;</span><span style="position:absolute;left:70px;top:0;width:10px;text-align:center">N</span></div>
<div class="a rs" style="left:173px;top:755px;height:16px;line-height:16px;width:130px;transform-origin:0 0;transform:rotate(-90deg)"><span style="position:absolute;left:0px;top:0;width:10px;text-align:center">5</span><span style="position:absolute;left:10px;top:0;width:10px;text-align:center">0</span><span style="position:absolute;left:20px;top:0;width:10px;text-align:center">0</span><span style="position:absolute;left:30px;top:0;width:10px;text-align:center">0</span><span style="position:absolute;left:40px;top:0;width:10px;text-align:center">.</span><span style="position:absolute;left:50px;top:0;width:10px;text-align:center">0</span><span style="position:absolute;left:60px;top:0;width:10px;text-align:center">0</span><span style="position:absolute;left:70px;top:0;width:10px;text-align:center">&nbsp;</span><span style="position:absolute;left:80px;top:0;width:10px;text-align:center">m</span><span style="position:absolute;left:90px;top:0;width:10px;text-align:center">&nbsp;</span><span style="position:absolute;left:100px;top:0;width:10px;text-align:center">N</span></div>
<div class="a rs" style="left:173px;top:567px;height:16px;line-height:16px;width:130px;transform-origin:0 0;transform:rotate(-90deg)"><span style="position:absolute;left:0px;top:0;width:10px;text-align:center">1</span><span style="position:absolute;left:10px;top:0;width:10px;text-align:center">0</span><span style="position:absolute;left:20px;top:0;width:10px;text-align:center">0</span><span style="position:absolute;left:30px;top:0;width:10px;text-align:center">0</span><span style="position:absolute;left:40px;top:0;width:10px;text-align:center">0</span><span style="position:absolute;left:50px;top:0;width:10px;text-align:center">.</span><span style="position:absolute;left:60px;top:0;width:10px;text-align:center">0</span><span style="position:absolute;left:70px;top:0;width:10px;text-align:center">0</span><span style="position:absolute;left:80px;top:0;width:10px;text-align:center">&nbsp;</span><span style="position:absolute;left:90px;top:0;width:10px;text-align:center">m</span><span style="position:absolute;left:100px;top:0;width:10px;text-align:center">&nbsp;</span><span style="position:absolute;left:110px;top:0;width:10px;text-align:center">N</span></div>
<div class="a rs" style="left:173px;top:380px;height:16px;line-height:16px;width:130px;transform-origin:0 0;transform:rotate(-90deg)"><span style="position:absolute;left:0px;top:0;width:10px;text-align:center">1</span><span style="position:absolute;left:10px;top:0;width:10px;text-align:center">5</span><span style="position:absolute;left:20px;top:0;width:10px;text-align:center">0</span><span style="position:absolute;left:30px;top:0;width:10px;text-align:center">0</span><span style="position:absolute;left:40px;top:0;width:10px;text-align:center">0</span><span style="position:absolute;left:50px;top:0;width:10px;text-align:center">.</span><span style="position:absolute;left:60px;top:0;width:10px;text-align:center">0</span><span style="position:absolute;left:70px;top:0;width:10px;text-align:center">0</span><span style="position:absolute;left:80px;top:0;width:10px;text-align:center">&nbsp;</span><span style="position:absolute;left:90px;top:0;width:10px;text-align:center">m</span><span style="position:absolute;left:100px;top:0;width:10px;text-align:center">&nbsp;</span><span style="position:absolute;left:110px;top:0;width:10px;text-align:center">N</span></div>
<div class="a rs" style="left:173px;top:192px;height:16px;line-height:16px;width:130px;transform-origin:0 0;transform:rotate(-90deg)"><span style="position:absolute;left:0px;top:0;width:10px;text-align:center">2</span><span style="position:absolute;left:10px;top:0;width:10px;text-align:center">0</span><span style="position:absolute;left:20px;top:0;width:10px;text-align:center">0</span><span style="position:absolute;left:30px;top:0;width:10px;text-align:center">0</span><span style="position:absolute;left:40px;top:0;width:10px;text-align:center">0</span><span style="position:absolute;left:50px;top:0;width:10px;text-align:center">.</span><span style="position:absolute;left:60px;top:0;width:10px;text-align:center">0</span><span style="position:absolute;left:70px;top:0;width:10px;text-align:center">0</span><span style="position:absolute;left:80px;top:0;width:10px;text-align:center">&nbsp;</span><span style="position:absolute;left:90px;top:0;width:10px;text-align:center">m</span><span style="position:absolute;left:100px;top:0;width:10px;text-align:center">&nbsp;</span><span style="position:absolute;left:110px;top:0;width:10px;text-align:center">N</span></div>
</div>
<div id="map" class="a" style="left:486px;top:177px;width:769px;height:769px;background:#52d5a0;overflow:hidden">
<svg width="769" height="769" viewBox="0 0 769 769" style="position:absolute;left:0;top:0">
<g fill="#4ecf99" stroke="#3d9c77" stroke-width="2.6" stroke-linejoin="round">
<polygon points="0.0,240.0 50.7,232.8 88.6,231.0 112.2,265.4 108.5,279.8 90.4,294.3 61.5,279.8 32.6,287.1 0.0,290.7"/>
<polygon points="168.2,222.0 191.8,216.5 227.9,225.6 237.0,232.8 227.9,243.7 202.6,241.8 173.7,232.8"/>
<polygon points="206.2,290.7 224.3,265.4 253.3,269.0 275.0,290.7 275.0,316.0 246.0,321.4 217.0,312.4 191.8,308.8"/>
<polygon points="43.4,323.2 90.4,319.6 137.5,330.5 180.9,348.6 177.3,370.3 144.7,363.0 108.5,355.8 108.5,370.3 72.4,392.0 47.0,388.4 28.9,363.0"/>
<polygon points="336.5,250.9 361.8,245.5 385.0,247.3 385.0,276.2 361.8,276.2 340.1,265.4"/>
<polygon points="325.6,359.4 361.8,352.2 385.0,355.8 385.0,424.5 350.9,424.5 325.6,410.0"/>
<polygon points="318.6,65.0 335.4,69.8 376.3,81.8 398.0,105.9 390.7,134.7 371.5,139.6 335.4,130.0 318.6,125.1 309.0,101.0"/>
<polygon points="510.6,170.0 539.6,152.0 575.8,137.5 608.3,135.7 637.3,142.9 642.7,162.8 637.3,188.1 601.1,199.0 586.6,209.8 586.6,235.2 554.0,224.3 536.0,206.2 510.6,199.0"/>
<polygon points="688.0,119.0 709.0,115.5 745.0,105.0 769.0,98.0 769.0,148.0 731.0,148.0 706.0,145.0 684.0,130.0"/>
<polygon points="456.0,361.8 478.0,332.9 507.0,329.3 521.5,347.4 514.0,376.3 492.5,385.0 456.0,385.0"/>
<polygon points="627.5,347.4 646.8,341.4 666.0,347.4 683.0,364.3 685.3,390.8 675.7,400.4 656.4,410.0 632.3,424.5 613.1,424.5 593.8,412.4 589.0,400.4 598.6,386.0 608.3,373.9 617.9,361.9"/>
<polygon points="536.0,294.5 545.7,283.7 565.0,287.3 572.2,299.3 560.1,307.7 540.9,301.7"/>
<polygon points="65.1,615.5 108.5,586.6 162.8,586.6 170.0,608.3 159.2,637.3 137.5,659.0 108.5,684.3 86.8,680.7 68.7,651.7"/>
<polygon points="14.5,640.9 47.0,633.6 65.1,644.5 57.9,673.4 47.0,698.8 28.9,695.1 18.1,669.8"/>
<polygon points="285.8,568.5 307.5,568.5 336.5,590.2 347.3,619.2 340.1,651.7 318.4,669.8 300.3,666.2 289.4,637.3 296.7,615.5 285.8,601.1"/>
<polygon points="213.5,417.3 235.2,408.3 271.3,399.2 303.9,399.2 318.4,410.1 314.8,439.0 289.4,453.5 260.5,460.7 235.2,453.5 213.5,435.4"/>
<polygon points="32.6,412.9 86.8,416.6 126.6,449.1 133.9,463.6 123.0,492.5 94.1,492.5 61.5,485.3 54.3,463.6 36.2,438.3"/>
<polygon points="144.7,492.5 180.9,456.4 202.6,467.2 231.5,488.9 260.5,492.5 267.7,507.0 253.3,521.5 224.3,517.9 202.6,499.8 152.0,499.8"/>
<polygon points="347.3,467.2 369.0,467.2 379.9,481.7 372.6,492.5 350.9,488.9"/>
<polygon points="155.6,698.8 180.9,687.9 199.0,691.5 195.4,709.6 170.0,731.3 159.2,727.7"/>
<polygon points="318.4,684.3 343.7,684.3 358.2,709.6 350.9,724.1 325.6,720.5"/>
<polygon points="14.5,745.8 54.3,742.2 83.2,745.8 83.2,770.0 14.5,770.0"/>
<polygon points="231.5,742.0 253.0,731.0 282.0,738.0 289.0,760.0 253.0,770.0 235.0,761.0"/>
<polygon points="0.0,503.4 21.7,492.5 28.9,528.7 21.7,543.2 0.0,543.2"/>
<polygon points="391.2,503.4 420.2,481.7 445.5,474.4 474.4,496.2 492.5,499.8 514.2,536.0 521.5,564.9 492.5,579.4 456.4,572.1 412.9,575.8 391.2,572.1 384.0,546.8 384.0,503.4"/>
<polygon points="384.0,579.4 427.4,575.8 467.2,579.4 485.3,597.5 467.2,611.9 431.0,619.2 384.0,633.6"/>
<polygon points="615.5,449.1 659.0,434.7 702.4,441.9 716.9,460.0 709.6,503.4 702.4,528.7 659.0,517.9 637.3,507.0 622.8,478.1"/>
<polygon points="709.6,528.7 738.6,514.2 770.0,517.9 770.0,568.5 738.6,568.5 716.9,561.3"/>
<polygon points="702.4,615.5 731.3,597.5 770.0,593.8 770.0,684.3 731.3,673.4 709.6,644.5"/>
<polygon points="517.9,633.6 543.2,619.2 579.4,615.5 593.8,630.0 586.6,651.7 557.7,655.3 521.5,644.5"/>
<polygon points="615.5,731.3 637.3,720.5 669.8,716.9 680.7,727.7 673.4,760.3 637.3,770.0 615.5,760.3"/>
<polygon points="463.6,706.0 499.8,702.4 510.6,716.9 503.4,727.7 467.2,727.7"/>
<polygon points="644.5,601.1 680.7,601.1 702.4,615.5 695.1,637.3 659.0,637.3 637.3,622.8"/>
</g><g fill="none" stroke="#80f2c4" stroke-width="1.3" stroke-linejoin="round" transform="translate(-1.2,-1.2)">
<polygon points="0.0,240.0 50.7,232.8 88.6,231.0 112.2,265.4 108.5,279.8 90.4,294.3 61.5,279.8 32.6,287.1 0.0,290.7"/>
<polygon points="168.2,222.0 191.8,216.5 227.9,225.6 237.0,232.8 227.9,243.7 202.6,241.8 173.7,232.8"/>
<polygon points="206.2,290.7 224.3,265.4 253.3,269.0 275.0,290.7 275.0,316.0 246.0,321.4 217.0,312.4 191.8,308.8"/>
<polygon points="43.4,323.2 90.4,319.6 137.5,330.5 180.9,348.6 177.3,370.3 144.7,363.0 108.5,355.8 108.5,370.3 72.4,392.0 47.0,388.4 28.9,363.0"/>
<polygon points="336.5,250.9 361.8,245.5 385.0,247.3 385.0,276.2 361.8,276.2 340.1,265.4"/>
<polygon points="325.6,359.4 361.8,352.2 385.0,355.8 385.0,424.5 350.9,424.5 325.6,410.0"/>
<polygon points="318.6,65.0 335.4,69.8 376.3,81.8 398.0,105.9 390.7,134.7 371.5,139.6 335.4,130.0 318.6,125.1 309.0,101.0"/>
<polygon points="510.6,170.0 539.6,152.0 575.8,137.5 608.3,135.7 637.3,142.9 642.7,162.8 637.3,188.1 601.1,199.0 586.6,209.8 586.6,235.2 554.0,224.3 536.0,206.2 510.6,199.0"/>
<polygon points="688.0,119.0 709.0,115.5 745.0,105.0 769.0,98.0 769.0,148.0 731.0,148.0 706.0,145.0 684.0,130.0"/>
<polygon points="456.0,361.8 478.0,332.9 507.0,329.3 521.5,347.4 514.0,376.3 492.5,385.0 456.0,385.0"/>
<polygon points="627.5,347.4 646.8,341.4 666.0,347.4 683.0,364.3 685.3,390.8 675.7,400.4 656.4,410.0 632.3,424.5 613.1,424.5 593.8,412.4 589.0,400.4 598.6,386.0 608.3,373.9 617.9,361.9"/>
<polygon points="536.0,294.5 545.7,283.7 565.0,287.3 572.2,299.3 560.1,307.7 540.9,301.7"/>
<polygon points="65.1,615.5 108.5,586.6 162.8,586.6 170.0,608.3 159.2,637.3 137.5,659.0 108.5,684.3 86.8,680.7 68.7,651.7"/>
<polygon points="14.5,640.9 47.0,633.6 65.1,644.5 57.9,673.4 47.0,698.8 28.9,695.1 18.1,669.8"/>
<polygon points="285.8,568.5 307.5,568.5 336.5,590.2 347.3,619.2 340.1,651.7 318.4,669.8 300.3,666.2 289.4,637.3 296.7,615.5 285.8,601.1"/>
<polygon points="213.5,417.3 235.2,408.3 271.3,399.2 303.9,399.2 318.4,410.1 314.8,439.0 289.4,453.5 260.5,460.7 235.2,453.5 213.5,435.4"/>
<polygon points="32.6,412.9 86.8,416.6 126.6,449.1 133.9,463.6 123.0,492.5 94.1,492.5 61.5,485.3 54.3,463.6 36.2,438.3"/>
<polygon points="144.7,492.5 180.9,456.4 202.6,467.2 231.5,488.9 260.5,492.5 267.7,507.0 253.3,521.5 224.3,517.9 202.6,499.8 152.0,499.8"/>
<polygon points="347.3,467.2 369.0,467.2 379.9,481.7 372.6,492.5 350.9,488.9"/>
<polygon points="155.6,698.8 180.9,687.9 199.0,691.5 195.4,709.6 170.0,731.3 159.2,727.7"/>
<polygon points="318.4,684.3 343.7,684.3 358.2,709.6 350.9,724.1 325.6,720.5"/>
<polygon points="14.5,745.8 54.3,742.2 83.2,745.8 83.2,770.0 14.5,770.0"/>
<polygon points="231.5,742.0 253.0,731.0 282.0,738.0 289.0,760.0 253.0,770.0 235.0,761.0"/>
<polygon points="0.0,503.4 21.7,492.5 28.9,528.7 21.7,543.2 0.0,543.2"/>
<polygon points="391.2,503.4 420.2,481.7 445.5,474.4 474.4,496.2 492.5,499.8 514.2,536.0 521.5,564.9 492.5,579.4 456.4,572.1 412.9,575.8 391.2,572.1 384.0,546.8 384.0,503.4"/>
<polygon points="384.0,579.4 427.4,575.8 467.2,579.4 485.3,597.5 467.2,611.9 431.0,619.2 384.0,633.6"/>
<polygon points="615.5,449.1 659.0,434.7 702.4,441.9 716.9,460.0 709.6,503.4 702.4,528.7 659.0,517.9 637.3,507.0 622.8,478.1"/>
<polygon points="709.6,528.7 738.6,514.2 770.0,517.9 770.0,568.5 738.6,568.5 716.9,561.3"/>
<polygon points="702.4,615.5 731.3,597.5 770.0,593.8 770.0,684.3 731.3,673.4 709.6,644.5"/>
<polygon points="517.9,633.6 543.2,619.2 579.4,615.5 593.8,630.0 586.6,651.7 557.7,655.3 521.5,644.5"/>
<polygon points="615.5,731.3 637.3,720.5 669.8,716.9 680.7,727.7 673.4,760.3 637.3,770.0 615.5,760.3"/>
<polygon points="463.6,706.0 499.8,702.4 510.6,716.9 503.4,727.7 467.2,727.7"/>
<polygon points="644.5,601.1 680.7,601.1 702.4,615.5 695.1,637.3 659.0,637.3 637.3,622.8"/>
</g>
<g fill="none" stroke-linejoin="round">
<polyline points="139.3,193.0 133.9,214.7 135.7,243.7 144.7,269.0 159.2,285.3 180.9,305.2" stroke="#80f2c4" stroke-width="1.2" transform="translate(-1.6,-1.6)"/><polyline points="139.3,193.0 133.9,214.7 135.7,243.7 144.7,269.0 159.2,285.3 180.9,305.2" stroke="#3d9c77" stroke-width="4.2"/><polyline points="139.3,193.0 133.9,214.7 135.7,243.7 144.7,269.0 159.2,285.3 180.9,305.2" stroke="#55d6a2" stroke-width="1.8"/><polyline points="139.3,193.0 133.9,214.7 135.7,243.7 144.7,269.0 159.2,285.3 180.9,305.2" stroke="#1a5ca8" stroke-width="2" stroke-dasharray="2 6"/>
<polyline points="94.1,236.4 108.5,240.0 119.4,261.7 119.4,276.2 104.9,297.9 79.6,308.8 50.7,312.4 36.2,317.8 43.4,337.7 54.3,352.2 54.3,366.7 43.4,384.8 27.1,395.6 14.5,410.0 18.1,419.1 36.2,420.9 57.9,433.6 65.1,453.5 72.4,462.5 54.3,475.2 50.7,482.4 57.9,507.0 76.0,517.9 72.4,543.2 86.8,561.3 104.9,575.8 137.5,583.0 166.4,586.6 206.2,595.6 180.9,630.0 166.4,655.3 159.2,684.3 155.6,709.6 159.2,727.7 188.1,735.0 217.0,731.3 238.8,711.4 260.5,713.2 289.4,731.3 318.4,742.2 347.3,749.4 385.0,760.3" stroke="#80f2c4" stroke-width="1.2" transform="translate(-1.6,-1.6)"/><polyline points="94.1,236.4 108.5,240.0 119.4,261.7 119.4,276.2 104.9,297.9 79.6,308.8 50.7,312.4 36.2,317.8 43.4,337.7 54.3,352.2 54.3,366.7 43.4,384.8 27.1,395.6 14.5,410.0 18.1,419.1 36.2,420.9 57.9,433.6 65.1,453.5 72.4,462.5 54.3,475.2 50.7,482.4 57.9,507.0 76.0,517.9 72.4,543.2 86.8,561.3 104.9,575.8 137.5,583.0 166.4,586.6 206.2,595.6 180.9,630.0 166.4,655.3 159.2,684.3 155.6,709.6 159.2,727.7 188.1,735.0 217.0,731.3 238.8,711.4 260.5,713.2 289.4,731.3 318.4,742.2 347.3,749.4 385.0,760.3" stroke="#3d9c77" stroke-width="4.2"/><polyline points="94.1,236.4 108.5,240.0 119.4,261.7 119.4,276.2 104.9,297.9 79.6,308.8 50.7,312.4 36.2,317.8 43.4,337.7 54.3,352.2 54.3,366.7 43.4,384.8 27.1,395.6 14.5,410.0 18.1,419.1 36.2,420.9 57.9,433.6 65.1,453.5 72.4,462.5 54.3,475.2 50.7,482.4 57.9,507.0 76.0,517.9 72.4,543.2 86.8,561.3 104.9,575.8 137.5,583.0 166.4,586.6 206.2,595.6 180.9,630.0 166.4,655.3 159.2,684.3 155.6,709.6 159.2,727.7 188.1,735.0 217.0,731.3 238.8,711.4 260.5,713.2 289.4,731.3 318.4,742.2 347.3,749.4 385.0,760.3" stroke="#55d6a2" stroke-width="1.8"/><polyline points="94.1,236.4 108.5,240.0 119.4,261.7 119.4,276.2 104.9,297.9 79.6,308.8 50.7,312.4 36.2,317.8 43.4,337.7 54.3,352.2 54.3,366.7 43.4,384.8 27.1,395.6 14.5,410.0 18.1,419.1 36.2,420.9 57.9,433.6 65.1,453.5 72.4,462.5 54.3,475.2 50.7,482.4 57.9,507.0 76.0,517.9 72.4,543.2 86.8,561.3 104.9,575.8 137.5,583.0 166.4,586.6 206.2,595.6 180.9,630.0 166.4,655.3 159.2,684.3 155.6,709.6 159.2,727.7 188.1,735.0 217.0,731.3 238.8,711.4 260.5,713.2 289.4,731.3 318.4,742.2 347.3,749.4 385.0,760.3" stroke="#1a5ca8" stroke-width="2" stroke-dasharray="2 6"/>
<polyline points="249.6,193.0 282.2,211.1 307.5,229.2 361.8,240.0 385.0,247.3" stroke="#80f2c4" stroke-width="1.2" transform="translate(-1.6,-1.6)"/><polyline points="249.6,193.0 282.2,211.1 307.5,229.2 361.8,240.0 385.0,247.3" stroke="#3d9c77" stroke-width="4.2"/><polyline points="249.6,193.0 282.2,211.1 307.5,229.2 361.8,240.0 385.0,247.3" stroke="#55d6a2" stroke-width="1.8"/><polyline points="249.6,193.0 282.2,211.1 307.5,229.2 361.8,240.0 385.0,247.3" stroke="#1a5ca8" stroke-width="2" stroke-dasharray="2 6"/>
<polyline points="282.2,214.7 278.6,254.5 269.5,269.0 285.8,297.9 300.3,319.6 318.4,337.7 314.8,359.4 307.5,377.5 325.6,402.8 314.8,428.2 322.0,446.3 340.1,451.7" stroke="#80f2c4" stroke-width="1.2" transform="translate(-1.6,-1.6)"/><polyline points="282.2,214.7 278.6,254.5 269.5,269.0 285.8,297.9 300.3,319.6 318.4,337.7 314.8,359.4 307.5,377.5 325.6,402.8 314.8,428.2 322.0,446.3 340.1,451.7" stroke="#3d9c77" stroke-width="4.2"/><polyline points="282.2,214.7 278.6,254.5 269.5,269.0 285.8,297.9 300.3,319.6 318.4,337.7 314.8,359.4 307.5,377.5 325.6,402.8 314.8,428.2 322.0,446.3 340.1,451.7" stroke="#55d6a2" stroke-width="1.8"/><polyline points="282.2,214.7 278.6,254.5 269.5,269.0 285.8,297.9 300.3,319.6 318.4,337.7 314.8,359.4 307.5,377.5 325.6,402.8 314.8,428.2 322.0,446.3 340.1,451.7" stroke="#1a5ca8" stroke-width="2" stroke-dasharray="2 6"/>
<polyline points="253.3,485.3 275.0,503.4 282.2,521.5 296.7,521.5 325.6,525.1 336.5,536.0 354.6,543.2" stroke="#80f2c4" stroke-width="1.2" transform="translate(-1.6,-1.6)"/><polyline points="253.3,485.3 275.0,503.4 282.2,521.5 296.7,521.5 325.6,525.1 336.5,536.0 354.6,543.2" stroke="#3d9c77" stroke-width="4.2"/><polyline points="253.3,485.3 275.0,503.4 282.2,521.5 296.7,521.5 325.6,525.1 336.5,536.0 354.6,543.2" stroke="#55d6a2" stroke-width="1.8"/><polyline points="253.3,485.3 275.0,503.4 282.2,521.5 296.7,521.5 325.6,525.1 336.5,536.0 354.6,543.2" stroke="#1a5ca8" stroke-width="2" stroke-dasharray="2 6"/>
<polyline points="267.7,546.8 282.2,564.9 285.8,601.1 300.3,622.8 289.4,637.3" stroke="#80f2c4" stroke-width="1.2" transform="translate(-1.6,-1.6)"/><polyline points="267.7,546.8 282.2,564.9 285.8,601.1 300.3,622.8 289.4,637.3" stroke="#3d9c77" stroke-width="4.2"/><polyline points="267.7,546.8 282.2,564.9 285.8,601.1 300.3,622.8 289.4,637.3" stroke="#55d6a2" stroke-width="1.8"/><polyline points="267.7,546.8 282.2,564.9 285.8,601.1 300.3,622.8 289.4,637.3" stroke="#1a5ca8" stroke-width="2" stroke-dasharray="2 6"/>
<polyline points="354.6,561.3 361.8,579.4 376.3,593.8 379.9,622.8 361.8,637.3 347.3,648.1" stroke="#80f2c4" stroke-width="1.2" transform="translate(-1.6,-1.6)"/><polyline points="354.6,561.3 361.8,579.4 376.3,593.8 379.9,622.8 361.8,637.3 347.3,648.1" stroke="#3d9c77" stroke-width="4.2"/><polyline points="354.6,561.3 361.8,579.4 376.3,593.8 379.9,622.8 361.8,637.3 347.3,648.1" stroke="#55d6a2" stroke-width="1.8"/><polyline points="354.6,561.3 361.8,579.4 376.3,593.8 379.9,622.8 361.8,637.3 347.3,648.1" stroke="#1a5ca8" stroke-width="2" stroke-dasharray="2 6"/>
<polyline points="644.5,123.0 673.4,133.9 680.7,152.0 684.3,170.0 680.7,199.0 664.4,209.8 666.2,224.3 691.5,242.4 698.8,256.9 702.4,275.0 709.6,300.3 702.4,318.4 720.5,354.6 731.3,385.0 731.3,405.7" stroke="#80f2c4" stroke-width="1.2" transform="translate(-1.6,-1.6)"/><polyline points="644.5,123.0 673.4,133.9 680.7,152.0 684.3,170.0 680.7,199.0 664.4,209.8 666.2,224.3 691.5,242.4 698.8,256.9 702.4,275.0 709.6,300.3 702.4,318.4 720.5,354.6 731.3,385.0 731.3,405.7" stroke="#3d9c77" stroke-width="4.2"/><polyline points="644.5,123.0 673.4,133.9 680.7,152.0 684.3,170.0 680.7,199.0 664.4,209.8 666.2,224.3 691.5,242.4 698.8,256.9 702.4,275.0 709.6,300.3 702.4,318.4 720.5,354.6 731.3,385.0 731.3,405.7" stroke="#55d6a2" stroke-width="1.8"/><polyline points="644.5,123.0 673.4,133.9 680.7,152.0 684.3,170.0 680.7,199.0 664.4,209.8 666.2,224.3 691.5,242.4 698.8,256.9 702.4,275.0 709.6,300.3 702.4,318.4 720.5,354.6 731.3,385.0 731.3,405.7" stroke="#1a5ca8" stroke-width="2" stroke-dasharray="2 6"/>
<polyline points="384.0,166.4 405.7,173.7 445.5,191.8 467.2,199.0 456.4,217.0 405.7,217.0 405.7,235.2 420.2,253.3 416.6,260.5" stroke="#80f2c4" stroke-width="1.2" transform="translate(-1.6,-1.6)"/><polyline points="384.0,166.4 405.7,173.7 445.5,191.8 467.2,199.0 456.4,217.0 405.7,217.0 405.7,235.2 420.2,253.3 416.6,260.5" stroke="#3d9c77" stroke-width="4.2"/><polyline points="384.0,166.4 405.7,173.7 445.5,191.8 467.2,199.0 456.4,217.0 405.7,217.0 405.7,235.2 420.2,253.3 416.6,260.5" stroke="#55d6a2" stroke-width="1.8"/><polyline points="384.0,166.4 405.7,173.7 445.5,191.8 467.2,199.0 456.4,217.0 405.7,217.0 405.7,235.2 420.2,253.3 416.6,260.5" stroke="#1a5ca8" stroke-width="2" stroke-dasharray="2 6"/>
<polyline points="507.0,467.2 528.7,485.3 539.6,510.6 536.0,521.5 550.4,543.2 572.1,564.9 601.1,586.6 630.0,604.7 644.5,619.2 666.2,633.6 702.4,630.0 731.3,608.3 731.3,593.8 753.0,597.5 769.0,597.5" stroke="#80f2c4" stroke-width="1.2" transform="translate(-1.6,-1.6)"/><polyline points="507.0,467.2 528.7,485.3 539.6,510.6 536.0,521.5 550.4,543.2 572.1,564.9 601.1,586.6 630.0,604.7 644.5,619.2 666.2,633.6 702.4,630.0 731.3,608.3 731.3,593.8 753.0,597.5 769.0,597.5" stroke="#3d9c77" stroke-width="4.2"/><polyline points="507.0,467.2 528.7,485.3 539.6,510.6 536.0,521.5 550.4,543.2 572.1,564.9 601.1,586.6 630.0,604.7 644.5,619.2 666.2,633.6 702.4,630.0 731.3,608.3 731.3,593.8 753.0,597.5 769.0,597.5" stroke="#55d6a2" stroke-width="1.8"/><polyline points="507.0,467.2 528.7,485.3 539.6,510.6 536.0,521.5 550.4,543.2 572.1,564.9 601.1,586.6 630.0,604.7 644.5,619.2 666.2,633.6 702.4,630.0 731.3,608.3 731.3,593.8 753.0,597.5 769.0,597.5" stroke="#1a5ca8" stroke-width="2" stroke-dasharray="2 6"/>
<polyline points="507.0,467.2 528.7,456.4 572.1,445.5 615.5,427.4 651.7,412.9 687.9,398.5 702.4,409.3 720.5,405.7 731.3,384.0" stroke="#80f2c4" stroke-width="1.2" transform="translate(-1.6,-1.6)"/><polyline points="507.0,467.2 528.7,456.4 572.1,445.5 615.5,427.4 651.7,412.9 687.9,398.5 702.4,409.3 720.5,405.7 731.3,384.0" stroke="#3d9c77" stroke-width="4.2"/><polyline points="507.0,467.2 528.7,456.4 572.1,445.5 615.5,427.4 651.7,412.9 687.9,398.5 702.4,409.3 720.5,405.7 731.3,384.0" stroke="#55d6a2" stroke-width="1.8"/><polyline points="507.0,467.2 528.7,456.4 572.1,445.5 615.5,427.4 651.7,412.9 687.9,398.5 702.4,409.3 720.5,405.7 731.3,384.0" stroke="#1a5ca8" stroke-width="2" stroke-dasharray="2 6"/>
<polyline points="611.9,633.6 608.3,659.0 572.1,666.2 557.7,680.7 572.1,706.0 583.0,727.7 572.1,742.2 521.5,720.5 474.4,727.7 438.3,745.8 412.9,742.2" stroke="#80f2c4" stroke-width="1.2" transform="translate(-1.6,-1.6)"/><polyline points="611.9,633.6 608.3,659.0 572.1,666.2 557.7,680.7 572.1,706.0 583.0,727.7 572.1,742.2 521.5,720.5 474.4,727.7 438.3,745.8 412.9,742.2" stroke="#3d9c77" stroke-width="4.2"/><polyline points="611.9,633.6 608.3,659.0 572.1,666.2 557.7,680.7 572.1,706.0 583.0,727.7 572.1,742.2 521.5,720.5 474.4,727.7 438.3,745.8 412.9,742.2" stroke="#55d6a2" stroke-width="1.8"/><polyline points="611.9,633.6 608.3,659.0 572.1,666.2 557.7,680.7 572.1,706.0 583.0,727.7 572.1,742.2 521.5,720.5 474.4,727.7 438.3,745.8 412.9,742.2" stroke="#1a5ca8" stroke-width="2" stroke-dasharray="2 6"/>
<polyline points="256.0,113.0 292.0,120.3 318.6,144.4 357.0,156.4 400.4,168.4 443.7,192.5 467.7,202.1" stroke="#80f2c4" stroke-width="1.2" transform="translate(-1.6,-1.6)"/><polyline points="256.0,113.0 292.0,120.3 318.6,144.4 357.0,156.4 400.4,168.4 443.7,192.5 467.7,202.1" stroke="#3d9c77" stroke-width="4.2"/><polyline points="256.0,113.0 292.0,120.3 318.6,144.4 357.0,156.4 400.4,168.4 443.7,192.5 467.7,202.1" stroke="#55d6a2" stroke-width="1.8"/><polyline points="256.0,113.0 292.0,120.3 318.6,144.4 357.0,156.4 400.4,168.4 443.7,192.5 467.7,202.1" stroke="#1a5ca8" stroke-width="2" stroke-dasharray="2 6"/>
<polyline points="256.0,197.3 304.1,211.7 347.4,231.0 376.3,240.6 400.4,256.0" stroke="#80f2c4" stroke-width="1.2" transform="translate(-1.6,-1.6)"/><polyline points="256.0,197.3 304.1,211.7 347.4,231.0 376.3,240.6 400.4,256.0" stroke="#3d9c77" stroke-width="4.2"/><polyline points="256.0,197.3 304.1,211.7 347.4,231.0 376.3,240.6 400.4,256.0" stroke="#55d6a2" stroke-width="1.8"/><polyline points="256.0,197.3 304.1,211.7 347.4,231.0 376.3,240.6 400.4,256.0" stroke="#1a5ca8" stroke-width="2" stroke-dasharray="2 6"/>
<polyline points="144.4,173.2 130.0,200.0 133.0,256.0" stroke="#80f2c4" stroke-width="1.2" transform="translate(-1.6,-1.6)"/><polyline points="144.4,173.2 130.0,200.0 133.0,256.0" stroke="#3d9c77" stroke-width="4.2"/><polyline points="144.4,173.2 130.0,200.0 133.0,256.0" stroke="#55d6a2" stroke-width="1.8"/><polyline points="144.4,173.2 130.0,200.0 133.0,256.0" stroke="#1a5ca8" stroke-width="2" stroke-dasharray="2 6"/>
<polyline points="0.0,415.0 20.0,425.0 36.2,420.9" stroke="#80f2c4" stroke-width="1.2" transform="translate(-1.6,-1.6)"/><polyline points="0.0,415.0 20.0,425.0 36.2,420.9" stroke="#3d9c77" stroke-width="4.2"/><polyline points="0.0,415.0 20.0,425.0 36.2,420.9" stroke="#55d6a2" stroke-width="1.8"/><polyline points="0.0,415.0 20.0,425.0 36.2,420.9" stroke="#1a5ca8" stroke-width="2" stroke-dasharray="2 6"/>
</g>
<g fill="none" stroke="#3d9c77" stroke-width="6" stroke-linejoin="round">
<polygon points="-5.0,-5.0 240.4,-5.0 240.4,0.0 240.4,5.3 242.1,8.8 242.1,15.8 228.0,16.7 226.3,20.2 231.6,23.7 240.4,35.2 251.0,46.6 252.7,52.8 251.8,63.3 236.9,66.8 234.3,73.0 235.6,79.6 250.0,84.8 252.7,99.3 255.3,112.5 262.0,118.0 240.8,117.0 230.3,125.6 227.7,136.2 229.0,146.7 239.5,146.7 239.5,163.8 235.6,167.7 234.3,188.8 219.8,191.4 215.8,198.0 198.7,202.6 180.3,196.7 164.5,191.4 160.6,177.0 167.2,170.4 189.5,170.4 198.7,177.0 213.2,175.6 222.4,169.7 230.3,170.4 231.6,148.0 214.5,142.7 204.0,148.0 194.8,134.8 163.2,134.2 136.9,136.2 121.1,146.7 114.5,157.2 114.5,170.4 143.5,170.4 143.5,172.0 130.3,177.0 125.0,178.3 114.5,171.0 108.0,165.0 104.0,157.2 91.0,158.0 29.0,166.0 0.0,177.0 -5.0,177.0"/>
<polygon points="311.6,-5.0 312.0,0.0 312.0,3.5 306.3,4.0 305.9,5.7 318.0,6.2 318.2,7.9 323.9,8.1 324.3,10.1 327.0,10.6 327.4,13.6 330.0,14.1 330.5,18.9 332.7,19.3 332.3,21.1 330.0,22.9 317.7,22.9 317.7,21.1 309.4,21.1 305.9,23.3 307.2,24.6 319.0,26.4 330.0,27.3 344.6,27.3 348.1,29.9 348.1,33.4 351.2,34.3 348.1,36.1 347.7,40.0 350.3,52.8 363.5,59.8 381.0,65.0 400.4,72.2 412.4,69.8 429.2,69.8 435.3,79.4 434.0,91.4 419.6,101.0 412.4,104.7 448.5,105.9 463.0,98.7 477.4,89.0 496.6,89.0 512.0,83.0 536.0,59.0 553.0,61.4 579.4,60.2 584.2,48.1 593.8,40.9 610.7,38.5 613.0,48.1 630.0,49.3 630.0,60.2 637.0,72.2 627.5,81.8 618.0,77.0 610.7,91.5 642.0,90.3 656.4,103.5 680.5,113.1 704.5,103.5 740.6,93.9 759.9,89.0 769.0,89.0 775.0,89.0 775.0,-5.0"/>
<polygon points="264.1,22.0 271.2,20.2 284.4,23.7 287.0,28.1 297.6,30.8 302.8,39.6 300.2,44.0 291.4,40.5 284.4,36.0 273.8,32.5 265.0,27.3"/>
<polygon points="56.5,195.0 69.8,196.0 77.0,192.5 84.2,204.5 79.4,214.1 67.4,211.7 57.7,204.5"/>
<polygon points="336.6,166.0 352.2,162.4 369.0,166.0 381.0,175.6 390.7,178.0 389.5,182.9 371.5,178.0 352.2,175.6 337.8,173.2"/>
<polygon points="400.4,185.0 412.4,185.0 438.9,192.5 436.5,196.0 414.8,192.5 400.4,188.8"/>
<polygon points="719.0,190.0 728.6,178.0 738.2,183.0 743.0,192.5 728.6,204.6 719.0,213.0 711.8,204.6"/>
<polygon points="678.0,170.0 686.5,173.0 684.0,192.5 675.6,202.0 672.0,195.0 673.0,182.0"/>
<polygon points="625.0,220.0 642.0,218.0 650.0,223.5 646.8,231.0 627.5,228.6"/>
<polygon points="622.0,240.0 640.0,238.0 649.0,245.0 646.8,256.0 622.7,256.0 618.0,250.0"/>
<polygon points="706.0,240.0 721.0,238.0 728.6,256.0 704.5,256.0"/>
<polygon points="716.0,223.0 727.0,221.0 731.0,229.0 718.0,231.0"/>
<polygon points="285.0,238.0 297.0,236.0 300.0,243.0 288.0,243.0"/>
<polygon points="299.0,228.6 309.0,229.0 308.0,236.0 300.0,235.0"/>
<polygon points="132.3,300.5 144.4,294.5 155.2,288.5 160.7,287.3 158.8,296.9 149.2,307.7 134.7,307.7"/>
<polygon points="190.0,270.4 202.0,270.4 214.0,281.3 211.7,286.0 199.7,283.7 190.0,275.2"/>
<polygon points="160.0,400.4 166.0,396.8 182.9,400.4 182.9,406.4 168.4,407.6"/>
<polygon points="441.3,270.4 448.5,266.8 460.5,277.7 465.3,277.7 472.6,270.4 487.0,266.8 496.6,272.8 512.0,281.0 516.8,287.3 512.0,292.0 491.8,294.5 477.4,304.0 467.7,316.0 455.7,318.6 438.9,313.7 437.7,292.0"/>
<polygon points="475.0,414.8 484.6,412.4 512.0,412.4 521.6,410.0 531.3,417.3 528.8,429.3 516.8,431.7 489.4,431.6 477.4,424.4"/>
<polygon points="392.0,429.2 402.8,428.0 408.8,434.0 400.4,438.9 396.8,446.0 390.7,443.7"/>
<polygon points="630.0,301.7 644.4,292.0 656.4,294.5 666.0,299.3 685.3,299.3 697.3,307.7 695.0,325.8 680.5,327.0 666.0,322.2 654.0,316.2 632.3,316.2 627.5,307.7"/>
<polygon points="622.7,256.0 646.8,256.0 643.2,272.8 637.2,282.5 625.0,277.7 621.5,265.6"/>
<polygon points="704.5,256.0 728.6,256.0 728.6,262.0 709.0,262.0"/>
<polygon points="749.0,286.0 756.3,286.0 760.0,298.0 768.0,304.0 769.0,323.4 757.5,321.0 755.0,309.0 749.0,297.0"/>
<polygon points="542.0,365.5 553.0,360.7 572.2,366.7 560.0,371.5 550.5,374.0"/>
<polygon points="519.2,470.2 531.3,470.2 533.7,477.4 555.3,475.0 584.2,473.8 593.8,479.8 598.6,494.3 596.2,512.0 548.1,512.0 536.0,501.5 519.2,484.6"/>
<polygon points="21.8,582.3 31.5,582.3 48.5,575.0 65.5,573.8 69.0,582.3 58.2,594.4 43.6,604.0 34.0,603.0 23.0,596.9"/>
<polygon points="132.0,537.5 145.5,526.5 155.0,536.2 150.3,541.0 133.3,541.0"/>
<polygon points="143.0,554.4 157.6,550.8 160.0,556.9 151.5,564.1 145.5,559.3"/>
<polygon points="111.5,567.8 116.4,558.0 126.0,556.9 134.5,566.6 123.6,569.0"/>
<polygon points="165.0,570.0 171.0,569.0 172.0,574.0 166.0,574.0"/>
<polygon points="196.4,626.0 201.2,628.4 206.0,634.5 218.2,632.0 232.7,636.9 238.8,643.0 232.7,650.2 218.2,649.0 208.5,644.2 198.8,640.5 195.2,633.2"/>
<polygon points="226.0,660.0 233.0,659.0 235.0,666.0 228.0,667.0"/>
<polygon points="0.0,712.0 4.8,713.3 9.7,720.5 23.0,725.4 17.0,730.2 7.3,729.0 0.0,723.0"/>
<polygon points="116.4,749.6 128.5,746.0 145.5,748.4 157.6,753.3 160.0,769.0 110.3,769.0 111.5,759.3"/>
<polygon points="346.9,538.7 355.4,531.4 362.7,533.8 377.2,546.0 380.8,555.6 374.8,562.9 362.7,561.7 355.4,555.6 354.2,546.0"/>
<polygon points="348.0,574.0 356.0,571.4 362.7,576.0 357.0,582.3 349.0,580.0"/>
<polygon points="466.9,618.7 482.7,613.8 486.3,626.0 492.4,647.8 492.4,660.0 479.0,666.0 469.3,660.0 457.2,652.6 447.5,644.2 459.6,635.7"/>
<polygon points="357.8,715.7 370.0,713.3 389.3,713.3 408.7,709.6 417.2,720.5 423.3,735.0 420.8,743.6 413.6,741.2 403.9,731.4 382.0,730.2 374.8,720.5 360.2,720.5"/>
<polygon points="270.5,710.8 280.2,713.3 297.2,725.4 319.0,733.9 323.9,738.7 311.8,741.2 297.2,733.9 285.1,725.4 275.4,718.1"/>
<polygon points="370.0,762.0 382.0,758.0 392.0,762.0 394.2,769.0 368.7,769.0"/>
<polygon points="483.0,763.0 497.0,759.0 498.4,769.0 481.5,769.0"/>
<polygon points="623.5,548.4 635.7,541.0 643.0,535.0 657.5,533.8 664.8,542.3 660.0,550.8 645.4,554.4 626.0,553.2"/>
<polygon points="632.0,579.9 638.0,576.3 645.4,581.0 647.8,587.2 635.7,588.4"/>
<polygon points="639.3,619.0 646.0,619.0 646.6,638.0 639.3,638.0"/>
<polygon points="628.4,672.0 635.7,666.0 645.4,676.9 657.5,679.3 669.6,669.6 676.9,662.3 691.4,664.8 703.6,681.7 701.1,691.4 691.4,697.5 669.6,696.3 652.6,689.0 638.0,684.2 628.4,677.3"/>
<polygon points="713.3,710.8 720.5,702.3 732.7,700.0 744.8,706.0 754.5,708.4 769.0,713.3 769.0,720.5 756.9,725.4 742.4,730.2 725.4,731.4 710.8,727.8 709.6,718.1"/>
<polygon points="518.0,737.0 533.0,736.3 535.0,743.6 520.0,743.0"/>
<polygon points="535.0,751.0 543.5,751.0 543.5,758.0 536.0,758.0"/>
<polygon points="567.0,762.0 575.0,762.0 575.0,769.0 566.6,769.0"/>
</g><g fill="none" stroke="#7cefc0" stroke-width="3.2" stroke-linejoin="round">
<polygon points="-5.0,-5.0 240.4,-5.0 240.4,0.0 240.4,5.3 242.1,8.8 242.1,15.8 228.0,16.7 226.3,20.2 231.6,23.7 240.4,35.2 251.0,46.6 252.7,52.8 251.8,63.3 236.9,66.8 234.3,73.0 235.6,79.6 250.0,84.8 252.7,99.3 255.3,112.5 262.0,118.0 240.8,117.0 230.3,125.6 227.7,136.2 229.0,146.7 239.5,146.7 239.5,163.8 235.6,167.7 234.3,188.8 219.8,191.4 215.8,198.0 198.7,202.6 180.3,196.7 164.5,191.4 160.6,177.0 167.2,170.4 189.5,170.4 198.7,177.0 213.2,175.6 222.4,169.7 230.3,170.4 231.6,148.0 214.5,142.7 204.0,148.0 194.8,134.8 163.2,134.2 136.9,136.2 121.1,146.7 114.5,157.2 114.5,170.4 143.5,170.4 143.5,172.0 130.3,177.0 125.0,178.3 114.5,171.0 108.0,165.0 104.0,157.2 91.0,158.0 29.0,166.0 0.0,177.0 -5.0,177.0"/>
<polygon points="311.6,-5.0 312.0,0.0 312.0,3.5 306.3,4.0 305.9,5.7 318.0,6.2 318.2,7.9 323.9,8.1 324.3,10.1 327.0,10.6 327.4,13.6 330.0,14.1 330.5,18.9 332.7,19.3 332.3,21.1 330.0,22.9 317.7,22.9 317.7,21.1 309.4,21.1 305.9,23.3 307.2,24.6 319.0,26.4 330.0,27.3 344.6,27.3 348.1,29.9 348.1,33.4 351.2,34.3 348.1,36.1 347.7,40.0 350.3,52.8 363.5,59.8 381.0,65.0 400.4,72.2 412.4,69.8 429.2,69.8 435.3,79.4 434.0,91.4 419.6,101.0 412.4,104.7 448.5,105.9 463.0,98.7 477.4,89.0 496.6,89.0 512.0,83.0 536.0,59.0 553.0,61.4 579.4,60.2 584.2,48.1 593.8,40.9 610.7,38.5 613.0,48.1 630.0,49.3 630.0,60.2 637.0,72.2 627.5,81.8 618.0,77.0 610.7,91.5 642.0,90.3 656.4,103.5 680.5,113.1 704.5,103.5 740.6,93.9 759.9,89.0 769.0,89.0 775.0,89.0 775.0,-5.0"/>
<polygon points="264.1,22.0 271.2,20.2 284.4,23.7 287.0,28.1 297.6,30.8 302.8,39.6 300.2,44.0 291.4,40.5 284.4,36.0 273.8,32.5 265.0,27.3"/>
<polygon points="56.5,195.0 69.8,196.0 77.0,192.5 84.2,204.5 79.4,214.1 67.4,211.7 57.7,204.5"/>
<polygon points="336.6,166.0 352.2,162.4 369.0,166.0 381.0,175.6 390.7,178.0 389.5,182.9 371.5,178.0 352.2,175.6 337.8,173.2"/>
<polygon points="400.4,185.0 412.4,185.0 438.9,192.5 436.5,196.0 414.8,192.5 400.4,188.8"/>
<polygon points="719.0,190.0 728.6,178.0 738.2,183.0 743.0,192.5 728.6,204.6 719.0,213.0 711.8,204.6"/>
<polygon points="678.0,170.0 686.5,173.0 684.0,192.5 675.6,202.0 672.0,195.0 673.0,182.0"/>
<polygon points="625.0,220.0 642.0,218.0 650.0,223.5 646.8,231.0 627.5,228.6"/>
<polygon points="622.0,240.0 640.0,238.0 649.0,245.0 646.8,256.0 622.7,256.0 618.0,250.0"/>
<polygon points="706.0,240.0 721.0,238.0 728.6,256.0 704.5,256.0"/>
<polygon points="716.0,223.0 727.0,221.0 731.0,229.0 718.0,231.0"/>
<polygon points="285.0,238.0 297.0,236.0 300.0,243.0 288.0,243.0"/>
<polygon points="299.0,228.6 309.0,229.0 308.0,236.0 300.0,235.0"/>
<polygon points="132.3,300.5 144.4,294.5 155.2,288.5 160.7,287.3 158.8,296.9 149.2,307.7 134.7,307.7"/>
<polygon points="190.0,270.4 202.0,270.4 214.0,281.3 211.7,286.0 199.7,283.7 190.0,275.2"/>
<polygon points="160.0,400.4 166.0,396.8 182.9,400.4 182.9,406.4 168.4,407.6"/>
<polygon points="441.3,270.4 448.5,266.8 460.5,277.7 465.3,277.7 472.6,270.4 487.0,266.8 496.6,272.8 512.0,281.0 516.8,287.3 512.0,292.0 491.8,294.5 477.4,304.0 467.7,316.0 455.7,318.6 438.9,313.7 437.7,292.0"/>
<polygon points="475.0,414.8 484.6,412.4 512.0,412.4 521.6,410.0 531.3,417.3 528.8,429.3 516.8,431.7 489.4,431.6 477.4,424.4"/>
<polygon points="392.0,429.2 402.8,428.0 408.8,434.0 400.4,438.9 396.8,446.0 390.7,443.7"/>
<polygon points="630.0,301.7 644.4,292.0 656.4,294.5 666.0,299.3 685.3,299.3 697.3,307.7 695.0,325.8 680.5,327.0 666.0,322.2 654.0,316.2 632.3,316.2 627.5,307.7"/>
<polygon points="622.7,256.0 646.8,256.0 643.2,272.8 637.2,282.5 625.0,277.7 621.5,265.6"/>
<polygon points="704.5,256.0 728.6,256.0 728.6,262.0 709.0,262.0"/>
<polygon points="749.0,286.0 756.3,286.0 760.0,298.0 768.0,304.0 769.0,323.4 757.5,321.0 755.0,309.0 749.0,297.0"/>
<polygon points="542.0,365.5 553.0,360.7 572.2,366.7 560.0,371.5 550.5,374.0"/>
<polygon points="519.2,470.2 531.3,470.2 533.7,477.4 555.3,475.0 584.2,473.8 593.8,479.8 598.6,494.3 596.2,512.0 548.1,512.0 536.0,501.5 519.2,484.6"/>
<polygon points="21.8,582.3 31.5,582.3 48.5,575.0 65.5,573.8 69.0,582.3 58.2,594.4 43.6,604.0 34.0,603.0 23.0,596.9"/>
<polygon points="132.0,537.5 145.5,526.5 155.0,536.2 150.3,541.0 133.3,541.0"/>
<polygon points="143.0,554.4 157.6,550.8 160.0,556.9 151.5,564.1 145.5,559.3"/>
<polygon points="111.5,567.8 116.4,558.0 126.0,556.9 134.5,566.6 123.6,569.0"/>
<polygon points="165.0,570.0 171.0,569.0 172.0,574.0 166.0,574.0"/>
<polygon points="196.4,626.0 201.2,628.4 206.0,634.5 218.2,632.0 232.7,636.9 238.8,643.0 232.7,650.2 218.2,649.0 208.5,644.2 198.8,640.5 195.2,633.2"/>
<polygon points="226.0,660.0 233.0,659.0 235.0,666.0 228.0,667.0"/>
<polygon points="0.0,712.0 4.8,713.3 9.7,720.5 23.0,725.4 17.0,730.2 7.3,729.0 0.0,723.0"/>
<polygon points="116.4,749.6 128.5,746.0 145.5,748.4 157.6,753.3 160.0,769.0 110.3,769.0 111.5,759.3"/>
<polygon points="346.9,538.7 355.4,531.4 362.7,533.8 377.2,546.0 380.8,555.6 374.8,562.9 362.7,561.7 355.4,555.6 354.2,546.0"/>
<polygon points="348.0,574.0 356.0,571.4 362.7,576.0 357.0,582.3 349.0,580.0"/>
<polygon points="466.9,618.7 482.7,613.8 486.3,626.0 492.4,647.8 492.4,660.0 479.0,666.0 469.3,660.0 457.2,652.6 447.5,644.2 459.6,635.7"/>
<polygon points="357.8,715.7 370.0,713.3 389.3,713.3 408.7,709.6 417.2,720.5 423.3,735.0 420.8,743.6 413.6,741.2 403.9,731.4 382.0,730.2 374.8,720.5 360.2,720.5"/>
<polygon points="270.5,710.8 280.2,713.3 297.2,725.4 319.0,733.9 323.9,738.7 311.8,741.2 297.2,733.9 285.1,725.4 275.4,718.1"/>
<polygon points="370.0,762.0 382.0,758.0 392.0,762.0 394.2,769.0 368.7,769.0"/>
<polygon points="483.0,763.0 497.0,759.0 498.4,769.0 481.5,769.0"/>
<polygon points="623.5,548.4 635.7,541.0 643.0,535.0 657.5,533.8 664.8,542.3 660.0,550.8 645.4,554.4 626.0,553.2"/>
<polygon points="632.0,579.9 638.0,576.3 645.4,581.0 647.8,587.2 635.7,588.4"/>
<polygon points="639.3,619.0 646.0,619.0 646.6,638.0 639.3,638.0"/>
<polygon points="628.4,672.0 635.7,666.0 645.4,676.9 657.5,679.3 669.6,669.6 676.9,662.3 691.4,664.8 703.6,681.7 701.1,691.4 691.4,697.5 669.6,696.3 652.6,689.0 638.0,684.2 628.4,677.3"/>
<polygon points="713.3,710.8 720.5,702.3 732.7,700.0 744.8,706.0 754.5,708.4 769.0,713.3 769.0,720.5 756.9,725.4 742.4,730.2 725.4,731.4 710.8,727.8 709.6,718.1"/>
<polygon points="518.0,737.0 533.0,736.3 535.0,743.6 520.0,743.0"/>
<polygon points="535.0,751.0 543.5,751.0 543.5,758.0 536.0,758.0"/>
<polygon points="567.0,762.0 575.0,762.0 575.0,769.0 566.6,769.0"/>
</g>
<g fill="#195d9a" stroke="none">
<polygon points="-5.0,-5.0 240.4,-5.0 240.4,0.0 240.4,5.3 242.1,8.8 242.1,15.8 228.0,16.7 226.3,20.2 231.6,23.7 240.4,35.2 251.0,46.6 252.7,52.8 251.8,63.3 236.9,66.8 234.3,73.0 235.6,79.6 250.0,84.8 252.7,99.3 255.3,112.5 262.0,118.0 240.8,117.0 230.3,125.6 227.7,136.2 229.0,146.7 239.5,146.7 239.5,163.8 235.6,167.7 234.3,188.8 219.8,191.4 215.8,198.0 198.7,202.6 180.3,196.7 164.5,191.4 160.6,177.0 167.2,170.4 189.5,170.4 198.7,177.0 213.2,175.6 222.4,169.7 230.3,170.4 231.6,148.0 214.5,142.7 204.0,148.0 194.8,134.8 163.2,134.2 136.9,136.2 121.1,146.7 114.5,157.2 114.5,170.4 143.5,170.4 143.5,172.0 130.3,177.0 125.0,178.3 114.5,171.0 108.0,165.0 104.0,157.2 91.0,158.0 29.0,166.0 0.0,177.0 -5.0,177.0"/>
<polygon points="311.6,-5.0 312.0,0.0 312.0,3.5 306.3,4.0 305.9,5.7 318.0,6.2 318.2,7.9 323.9,8.1 324.3,10.1 327.0,10.6 327.4,13.6 330.0,14.1 330.5,18.9 332.7,19.3 332.3,21.1 330.0,22.9 317.7,22.9 317.7,21.1 309.4,21.1 305.9,23.3 307.2,24.6 319.0,26.4 330.0,27.3 344.6,27.3 348.1,29.9 348.1,33.4 351.2,34.3 348.1,36.1 347.7,40.0 350.3,52.8 363.5,59.8 381.0,65.0 400.4,72.2 412.4,69.8 429.2,69.8 435.3,79.4 434.0,91.4 419.6,101.0 412.4,104.7 448.5,105.9 463.0,98.7 477.4,89.0 496.6,89.0 512.0,83.0 536.0,59.0 553.0,61.4 579.4,60.2 584.2,48.1 593.8,40.9 610.7,38.5 613.0,48.1 630.0,49.3 630.0,60.2 637.0,72.2 627.5,81.8 618.0,77.0 610.7,91.5 642.0,90.3 656.4,103.5 680.5,113.1 704.5,103.5 740.6,93.9 759.9,89.0 769.0,89.0 775.0,89.0 775.0,-5.0"/>
<polygon points="264.1,22.0 271.2,20.2 284.4,23.7 287.0,28.1 297.6,30.8 302.8,39.6 300.2,44.0 291.4,40.5 284.4,36.0 273.8,32.5 265.0,27.3"/>
<polygon points="56.5,195.0 69.8,196.0 77.0,192.5 84.2,204.5 79.4,214.1 67.4,211.7 57.7,204.5"/>
<polygon points="336.6,166.0 352.2,162.4 369.0,166.0 381.0,175.6 390.7,178.0 389.5,182.9 371.5,178.0 352.2,175.6 337.8,173.2"/>
<polygon points="400.4,185.0 412.4,185.0 438.9,192.5 436.5,196.0 414.8,192.5 400.4,188.8"/>
<polygon points="719.0,190.0 728.6,178.0 738.2,183.0 743.0,192.5 728.6,204.6 719.0,213.0 711.8,204.6"/>
<polygon points="678.0,170.0 686.5,173.0 684.0,192.5 675.6,202.0 672.0,195.0 673.0,182.0"/>
<polygon points="625.0,220.0 642.0,218.0 650.0,223.5 646.8,231.0 627.5,228.6"/>
<polygon points="622.0,240.0 640.0,238.0 649.0,245.0 646.8,256.0 622.7,256.0 618.0,250.0"/>
<polygon points="706.0,240.0 721.0,238.0 728.6,256.0 704.5,256.0"/>
<polygon points="716.0,223.0 727.0,221.0 731.0,229.0 718.0,231.0"/>
<polygon points="285.0,238.0 297.0,236.0 300.0,243.0 288.0,243.0"/>
<polygon points="299.0,228.6 309.0,229.0 308.0,236.0 300.0,235.0"/>
<polygon points="132.3,300.5 144.4,294.5 155.2,288.5 160.7,287.3 158.8,296.9 149.2,307.7 134.7,307.7"/>
<polygon points="190.0,270.4 202.0,270.4 214.0,281.3 211.7,286.0 199.7,283.7 190.0,275.2"/>
<polygon points="160.0,400.4 166.0,396.8 182.9,400.4 182.9,406.4 168.4,407.6"/>
<polygon points="441.3,270.4 448.5,266.8 460.5,277.7 465.3,277.7 472.6,270.4 487.0,266.8 496.6,272.8 512.0,281.0 516.8,287.3 512.0,292.0 491.8,294.5 477.4,304.0 467.7,316.0 455.7,318.6 438.9,313.7 437.7,292.0"/>
<polygon points="475.0,414.8 484.6,412.4 512.0,412.4 521.6,410.0 531.3,417.3 528.8,429.3 516.8,431.7 489.4,431.6 477.4,424.4"/>
<polygon points="392.0,429.2 402.8,428.0 408.8,434.0 400.4,438.9 396.8,446.0 390.7,443.7"/>
<polygon points="630.0,301.7 644.4,292.0 656.4,294.5 666.0,299.3 685.3,299.3 697.3,307.7 695.0,325.8 680.5,327.0 666.0,322.2 654.0,316.2 632.3,316.2 627.5,307.7"/>
<polygon points="622.7,256.0 646.8,256.0 643.2,272.8 637.2,282.5 625.0,277.7 621.5,265.6"/>
<polygon points="704.5,256.0 728.6,256.0 728.6,262.0 709.0,262.0"/>
<polygon points="749.0,286.0 756.3,286.0 760.0,298.0 768.0,304.0 769.0,323.4 757.5,321.0 755.0,309.0 749.0,297.0"/>
<polygon points="542.0,365.5 553.0,360.7 572.2,366.7 560.0,371.5 550.5,374.0"/>
<polygon points="519.2,470.2 531.3,470.2 533.7,477.4 555.3,475.0 584.2,473.8 593.8,479.8 598.6,494.3 596.2,512.0 548.1,512.0 536.0,501.5 519.2,484.6"/>
<polygon points="21.8,582.3 31.5,582.3 48.5,575.0 65.5,573.8 69.0,582.3 58.2,594.4 43.6,604.0 34.0,603.0 23.0,596.9"/>
<polygon points="132.0,537.5 145.5,526.5 155.0,536.2 150.3,541.0 133.3,541.0"/>
<polygon points="143.0,554.4 157.6,550.8 160.0,556.9 151.5,564.1 145.5,559.3"/>
<polygon points="111.5,567.8 116.4,558.0 126.0,556.9 134.5,566.6 123.6,569.0"/>
<polygon points="165.0,570.0 171.0,569.0 172.0,574.0 166.0,574.0"/>
<polygon points="196.4,626.0 201.2,628.4 206.0,634.5 218.2,632.0 232.7,636.9 238.8,643.0 232.7,650.2 218.2,649.0 208.5,644.2 198.8,640.5 195.2,633.2"/>
<polygon points="226.0,660.0 233.0,659.0 235.0,666.0 228.0,667.0"/>
<polygon points="0.0,712.0 4.8,713.3 9.7,720.5 23.0,725.4 17.0,730.2 7.3,729.0 0.0,723.0"/>
<polygon points="116.4,749.6 128.5,746.0 145.5,748.4 157.6,753.3 160.0,769.0 110.3,769.0 111.5,759.3"/>
<polygon points="346.9,538.7 355.4,531.4 362.7,533.8 377.2,546.0 380.8,555.6 374.8,562.9 362.7,561.7 355.4,555.6 354.2,546.0"/>
<polygon points="348.0,574.0 356.0,571.4 362.7,576.0 357.0,582.3 349.0,580.0"/>
<polygon points="466.9,618.7 482.7,613.8 486.3,626.0 492.4,647.8 492.4,660.0 479.0,666.0 469.3,660.0 457.2,652.6 447.5,644.2 459.6,635.7"/>
<polygon points="357.8,715.7 370.0,713.3 389.3,713.3 408.7,709.6 417.2,720.5 423.3,735.0 420.8,743.6 413.6,741.2 403.9,731.4 382.0,730.2 374.8,720.5 360.2,720.5"/>
<polygon points="270.5,710.8 280.2,713.3 297.2,725.4 319.0,733.9 323.9,738.7 311.8,741.2 297.2,733.9 285.1,725.4 275.4,718.1"/>
<polygon points="370.0,762.0 382.0,758.0 392.0,762.0 394.2,769.0 368.7,769.0"/>
<polygon points="483.0,763.0 497.0,759.0 498.4,769.0 481.5,769.0"/>
<polygon points="623.5,548.4 635.7,541.0 643.0,535.0 657.5,533.8 664.8,542.3 660.0,550.8 645.4,554.4 626.0,553.2"/>
<polygon points="632.0,579.9 638.0,576.3 645.4,581.0 647.8,587.2 635.7,588.4"/>
<polygon points="639.3,619.0 646.0,619.0 646.6,638.0 639.3,638.0"/>
<polygon points="628.4,672.0 635.7,666.0 645.4,676.9 657.5,679.3 669.6,669.6 676.9,662.3 691.4,664.8 703.6,681.7 701.1,691.4 691.4,697.5 669.6,696.3 652.6,689.0 638.0,684.2 628.4,677.3"/>
<polygon points="713.3,710.8 720.5,702.3 732.7,700.0 744.8,706.0 754.5,708.4 769.0,713.3 769.0,720.5 756.9,725.4 742.4,730.2 725.4,731.4 710.8,727.8 709.6,718.1"/>
<polygon points="518.0,737.0 533.0,736.3 535.0,743.6 520.0,743.0"/>
<polygon points="535.0,751.0 543.5,751.0 543.5,758.0 536.0,758.0"/>
<polygon points="567.0,762.0 575.0,762.0 575.0,769.0 566.6,769.0"/>
</g>
<circle cx="208.5" cy="158" r="6" fill="#195d9a"/>
</svg>
</div>

<!-- splitter right -->
<div class="a" style="left:1573px;top:81px;width:6px;height:931px;background:#dedede;border-left:1px solid #c4c4c4;border-right:1px solid #b0b0b0"></div>

<!-- right dock -->
<div class="hdr" style="left:1579px;top:81px;width:188px"><span>Template properties</span></div>
<div class="a" style="left:1579px;top:100px;width:188px;height:1px;background:#e8e8e8"></div>
<div class="a" style="left:1579px;top:101px;width:188px;height:23px;background:#f0f0f0"></div>
<div class="a" style="left:1579px;top:101px;width:22px;height:23px;background:#f8f8f8;border:1px solid #fff"></div>
<div class="a" style="left:1579px;top:124px;width:188px;height:285px;background:#fff;border-top:1px solid #808080;border-left:2px solid #909090;border-bottom:1px solid #808080"></div>
<div class="a" style="left:1581px;top:125px;width:186px;height:36px;background:#c6c6c6"></div>
<div class="a" style="left:1579px;top:409px;width:188px;height:4px;background:#e4e4e4"></div>
<div class="a" style="left:1579px;top:413px;width:188px;height:96px;background:#f0f0f0;border-top:1px solid #8c8c8c;border-left:2px solid #9a9a9a;border-bottom:2px solid #8c8c8c"></div>
<div class="a" style="left:1579px;top:509px;width:188px;height:5px;background:#dcdcdc"></div>
<div class="hdr" style="left:1579px;top:514px;width:188px;height:18px;border-top:none"><span style="top:3px">Layers manager</span></div>
<div class="a" style="left:1579px;top:532px;width:188px;height:381px;background:#f0f0f0;border-left:2px solid #b8b8b8;border-bottom:2px solid #8c8c8c"></div>
<div class="a" style="left:1579px;top:913px;width:188px;height:6px;background:#dcdcdc"></div>
<div class="hdr" style="left:1579px;top:919px;width:188px;height:18px;border-top:none"><span style="top:3px">Mapframes</span></div>
<div class="a" style="left:1579px;top:937px;width:188px;height:57px;background:#fff;border-top:2px solid #8c8c8c;border-left:2px solid #9a9a9a;border-bottom:1px solid #c0c0c0"></div>
<div class="a" style="left:1581px;top:939px;width:186px;height:13px;background:#3399ff"></div>
<div class="a" style="left:1583px;top:939px;color:#fff;font-size:11px;white-space:nowrap">DefaultMapFrame_1</div>
<div class="a" style="left:1579px;top:994px;width:188px;height:2px;background:#e0e0e0"></div>
<div class="a" style="left:1579px;top:996px;width:188px;height:16px;background:#f0f0f0;border-left:2px solid #b8b8b8"></div>

<div class="a" style="left:0;top:0;width:1767px;height:1012px;overflow:hidden">
<!-- template properties -->
<div class="a" style="left:1583px;top:129px;width:9px;height:9px;border:1px solid #000;background:#fff"></div>
<div class="a" style="left:1585px;top:133px;width:5px;height:1px;background:#000"></div>
<div class="a" style="left:1587px;top:131px;width:1px;height:5px;background:#000"></div>
<div class="a" style="left:1583px;top:147px;width:9px;height:9px;border:1px solid #000;background:#fff"></div>
<div class="a" style="left:1585px;top:151px;width:5px;height:1px;background:#000"></div>
<div class="a" style="left:1587px;top:149px;width:1px;height:5px;background:#000"></div>
<div class="a" style="left:1600px;top:128px;font-weight:bold;color:#8d8f96;white-space:nowrap">Appearance</div>
<div class="a" style="left:1600px;top:146px;font-weight:bold;color:#8d8f96;white-space:nowrap">Library general</div>
<!-- tabs -->
<div class="a" style="left:1579px;top:554px;width:188px;height:1px;background:#fff"></div>
<div class="a" style="left:1582px;top:534px;width:51px;height:21px;background:#f0f0f0;border-top:1px solid #fff;border-left:1px solid #fff;border-right:2px solid #7a7a7a"></div>
<div class="a" style="left:1587px;top:536px;white-space:nowrap;color:#111">Rasters</div>
<div class="a" style="left:1633px;top:536px;width:48px;height:18px;background:#f0f0f0;border-top:1px solid #fff;border-left:1px solid #fff;border-right:2px solid #7a7a7a"></div>
<div class="a" style="left:1637px;top:538px;white-space:nowrap;color:#111">Objects</div>
<div class="a" style="left:1681px;top:536px;width:47px;height:18px;background:#f0f0f0;border-top:1px solid #fff;border-left:1px solid #fff;border-right:2px solid #7a7a7a"></div>
<div class="a" style="left:1685px;top:538px;white-space:nowrap;color:#111">Shapes</div>
<!-- rows -->
<div class="a" style="left:1585px;top:556px;width:182px;height:40px;background:#007f3d"></div>
<div class="a" style="left:1585px;top:601px;width:182px;height:40px;background:#0b47d6"></div>
<div class="a" style="left:1585px;top:646px;width:182px;height:40px;background:#f6d28e"></div>
<div class="a" style="left:1649px;top:565px;white-space:nowrap;color:#02150a">P:\L3DT\ger.xyz</div>
<div class="a" style="left:1649px;top:610px;white-space:nowrap;color:#0a0f30">C:\Users\Irren\Desktop\</div>
<div class="a" style="left:1649px;top:655px;white-space:nowrap;color:#111">P:\sourceDEUTSCHLAND</div>
<svg class="a" style="left:1590px;top:565px" width="15" height="9" viewBox="0 0 15 9"><path d="M0.5 4.5 Q7.5 -2 14.5 4.5 Q7.5 11 0.5 4.5Z" fill="#fff" stroke="#000" stroke-width="1.3"/><circle cx="7.5" cy="4.3" r="2.6" fill="#000"/><circle cx="6.6" cy="3.4" r="0.9" fill="#fff"/></svg>
<svg class="a" style="left:1588px;top:576px" width="16" height="17" viewBox="0 0 16 17"><path d="M1 10h7v6H3l-2-2z" fill="#e8e8e8" stroke="#555" stroke-width="1"/><path d="M2 12h5" stroke="#999"/><rect x="8" y="5" width="7" height="6" fill="#8a8a8a"/><path d="M9.5 5V3a2 2 0 0 1 4 0v2" fill="none" stroke="#8a8a8a" stroke-width="1.3"/></svg>
<svg class="a" style="left:1590px;top:610px" width="15" height="9" viewBox="0 0 15 9"><path d="M0.5 4.5 Q7.5 -2 14.5 4.5 Q7.5 11 0.5 4.5Z" fill="#fff" stroke="#000" stroke-width="1.3"/><circle cx="7.5" cy="4.3" r="2.6" fill="#000"/><circle cx="6.6" cy="3.4" r="0.9" fill="#fff"/></svg>
<svg class="a" style="left:1588px;top:621px" width="16" height="17" viewBox="0 0 16 17"><path d="M1 10h7v6H3l-2-2z" fill="#e8e8e8" stroke="#555" stroke-width="1"/><path d="M2 12h5" stroke="#999"/><rect x="8" y="5" width="7" height="6" fill="#8a8a8a"/><path d="M9.5 5V3a2 2 0 0 1 4 0v2" fill="none" stroke="#8a8a8a" stroke-width="1.3"/></svg>
<svg class="a" style="left:1590px;top:655px" width="15" height="9" viewBox="0 0 15 9"><path d="M0.5 4.5 Q7.5 -2 14.5 4.5 Q7.5 11 0.5 4.5Z" fill="#fff" stroke="#000" stroke-width="1.3"/><circle cx="7.5" cy="4.3" r="2.6" fill="#000"/><circle cx="6.6" cy="3.4" r="0.9" fill="#fff"/></svg>
<svg class="a" style="left:1588px;top:666px" width="16" height="17" viewBox="0 0 16 17"><path d="M1 10h7v6H3l-2-2z" fill="#e8e8e8" stroke="#555" stroke-width="1"/><path d="M2 12h5" stroke="#999"/><rect x="8" y="5" width="7" height="6" fill="#8a8a8a"/><path d="M9.5 5V3a2 2 0 0 1 4 0v2" fill="none" stroke="#8a8a8a" stroke-width="1.3"/></svg>
<div class="a" style="left:1609px;top:559px;width:34px;height:34px;border:1px solid #f2f27a;background:#5c8a14;overflow:hidden"><div class="a" style="left:0;top:0;width:9px;height:6px;background:#3a3af2"></div><div class="a" style="left:15px;top:0;width:17px;height:3px;background:#3a3af2"></div><div class="a" style="left:3px;top:8px;width:6px;height:4px;background:#3fae3a;border-radius:2px"></div><div class="a" style="left:14px;top:10px;width:8px;height:5px;background:#3fae3a;border-radius:2px"></div><div class="a" style="left:22px;top:18px;width:7px;height:6px;background:#3fae3a;border-radius:2px"></div><div class="a" style="left:6px;top:20px;width:9px;height:5px;background:#3fae3a;border-radius:2px"></div><div class="a" style="left:12px;top:26px;width:8px;height:4px;background:#3fae3a;border-radius:2px"></div></div>
<div class="a" style="left:1609px;top:604px;width:34px;height:34px;border:1px solid #f2f27a;background:linear-gradient(160deg,#cfe3e8,#b5c99a 40%,#d4cfa0 80%,#e0dcc0)"><div class="a" style="right:0;top:0;width:5px;height:32px;background:#000"></div></div>
<div class="a" style="left:1609px;top:649px;width:34px;height:34px;border:1px solid #f2f27a;background:#000"><div class="a" style="left:0;top:0;width:22px;height:32px;background:#0d3a5c"></div><svg class="a" style="left:1px;top:0" width="22" height="32" viewBox="0 0 22 32"><path d="M7 1h6l2 4h4l1 6-2 6 2 5-2 6-5 3-3 1-7-1-2-6 1-6-2-5 2-6 3-3z" fill="#00f000"/><circle cx="12" cy="12" r="1.5" fill="#2020d0"/><circle cx="8" cy="22" r="1.5" fill="#2020d0"/><circle cx="15" cy="26" r="1.2" fill="#2020d0"/></svg></div>
</div>
<!-- close buttons -->
<svg class="a" style="left:146px;top:86px" width="11" height="10"><path d="M1.5 1.5l8 7M9.5 1.5l-8 7" stroke="#000" stroke-width="1.4"/></svg>
<svg class="a" style="left:146px;top:558px" width="11" height="10"><path d="M1.5 1.5l8 7M9.5 1.5l-8 7" stroke="#000" stroke-width="1.4"/></svg>
<svg class="a" style="left:1558px;top:86px" width="11" height="10"><path d="M1.5 1.5l8 7M9.5 1.5l-8 7" stroke="#000" stroke-width="1.4"/></svg>
<!-- left dock toolbar icons -->
<svg class="a" style="left:55px;top:529px" width="19" height="18" viewBox="0 0 19 18"><path d="M1 1l4 2 3-1 9 8v4l-7 4H3l-1-9z" fill="#9c9c9c"/><path d="M4 10v5M10 14l6-3" stroke="#eee" stroke-width="1"/></svg>
<div class="a" style="left:80px;top:528px;width:1px;height:20px;background:#909090"></div>
<svg class="a" style="left:91px;top:529px" width="12" height="17" viewBox="0 0 12 17"><rect x="2" y="0" width="6" height="3" fill="#9c9c9c"/><rect x="0" y="3" width="11" height="2" fill="#9c9c9c"/><path d="M1 6h9v10H1z" fill="#9c9c9c"/><path d="M3 7v6M5 7v6" stroke="#eee"/></svg>
<div class="a" style="left:113px;top:528px;width:1px;height:20px;background:#909090"></div>
<svg class="a" style="left:122px;top:532px" width="15" height="15" viewBox="0 0 15 15"><path d="M1.5 1.5h12v8H10l1 4-4-4H1.5z" fill="#fff" stroke="#111" stroke-width="1"/><path d="M3.5 3.5h8M3.5 5.5h8M3.5 7.5h8" stroke="#777" stroke-width=".8"/></svg>
<!-- crosshair -->
<div class="a" style="left:1307px;top:120px;width:1px;height:892px;background:#e84a4a"></div>
<div class="a" style="left:187px;top:985px;width:1386px;height:1px;background:#e84a4a"></div>
<div class="a" style="left:1303px;top:981px;width:9px;height:9px;border:1px solid #e84a4a"></div>
<!-- ruler markers -->
<svg class="a" style="left:1302px;top:101px" width="11" height="8"><path d="M1 1h9l-4.5 6z" fill="none" stroke="#e8a0a0" stroke-width="1"/><path d="M5.5 0v8" stroke="#e8a0a0"/></svg>
<svg class="a" style="left:168px;top:980px" width="8" height="11"><path d="M1 1v9l6-4.5z" fill="none" stroke="#e8a0a0" stroke-width="1"/><path d="M0 5.5h18" stroke="#e8a0a0"/></svg>
<div class="a" style="left:176px;top:985px;width:11px;height:1px;background:#e8a0a0"></div>
<!-- scale bar -->
<div class="a" style="left:227px;top:987px;width:162px;height:1px;background:#c8c8c8"></div>
<div class="a" style="left:227px;top:982px;width:1px;height:10px;background:#c8c8c8"></div>
<div class="a" style="left:388px;top:982px;width:1px;height:10px;background:#c8c8c8"></div>
<div class="a" style="left:227px;top:966px;font-family:'Liberation Mono',monospace;font-size:14px;letter-spacing:1.6px;color:#fff;white-space:nowrap;line-height:16px">4300.00 m</div>
<div class="a" style="left:227px;top:996px;font-family:'Liberation Mono',monospace;font-size:14px;letter-spacing:1.6px;color:#fff;white-space:nowrap;line-height:16px">DefaultMapFrame_1</div>
<!-- cursor -->
<svg class="a" style="left:1449px;top:1033px" width="13" height="20" viewBox="0 0 13 20"><path d="M0.5 0.5v16l4-4 3 6.5 2.2-1-3-6.3h5.8z" fill="#fff" stroke="#000" stroke-width="1"/></svg>
<!-- template prop icons -->
<svg class="a" style="left:1583px;top:105px" width="17" height="17" viewBox="0 0 17 17"><path d="M1 4l7-3 8 3v3l-7 3-8-3z" fill="#ff7a00" stroke="#b04800" stroke-width=".8"/><path d="M2 6l7 2.5 6-2.5" stroke="#fff" stroke-width="1" fill="none"/><path d="M1 10l7-3 8 3v3l-7 3-8-3z" fill="#ff7a00" stroke="#b04800" stroke-width=".8"/><path d="M2 12l7 2.5 6-2.5" stroke="#fff" stroke-width="1" fill="none"/></svg>
<svg class="a" style="left:1604px;top:107px" width="18" height="14" viewBox="0 0 18 14"><path d="M1 0v10" stroke="#ff7a00" stroke-dasharray="1 1.2"/><path d="M3 6l7-3 7 3v3l-7 3-7-3z" fill="#ff7a00" stroke="#b04800" stroke-width=".8"/><path d="M4 8l6 2.5 6-2.5" stroke="#fff" stroke-width="1" fill="none"/></svg>
<!-- layers toolbar -->
<div class="a" style="left:1585px;top:853px;width:182px;height:1px;background:#a0a0a0"></div>
<div class="a" style="left:1585px;top:855px;width:24px;height:22px;background:#f8f8f8;border-left:1px solid #e0e0e0"></div>
<svg class="a" style="left:1591px;top:864px" width="15" height="9" viewBox="0 0 15 9"><path d="M0.5 4.5 Q7.5 -2 14.5 4.5 Q7.5 11 0.5 4.5Z" fill="#fff" stroke="#000" stroke-width="1.2"/><circle cx="7.5" cy="4.3" r="2.5" fill="#000"/></svg>
<svg class="a" style="left:1614px;top:858px" width="16" height="17" viewBox="0 0 16 17"><path d="M1 10h7v6H3l-2-2z" fill="#e8e8e8" stroke="#333" stroke-width="1"/><rect x="8" y="5" width="7" height="6" fill="#ff7a00" stroke="#8a3a00" stroke-width=".6"/><path d="M9.5 5V3a2 2 0 0 1 4 0v2" fill="none" stroke="#ff7a00" stroke-width="1.3"/></svg>
<div class="a" style="left:1638px;top:857px;width:1px;height:20px;background:#909090"></div>
<svg class="a" style="left:1646px;top:858px" width="17" height="17" viewBox="0 0 17 17"><path d="M8.5 0l3 3h-6zM8.5 17l3-3h-6zM0 8.5l3-3v6zM17 8.5l-3-3v6z" fill="#ff7a00"/><path d="M5 5h7v7H7l-2-2z" fill="#ddd" stroke="#333"/></svg>
<div class="a" style="left:1671px;top:857px;width:1px;height:20px;background:#909090"></div>
<svg class="a" style="left:1680px;top:859px" width="17" height="17" viewBox="0 0 17 17"><path d="M2 4.5 Q8.5 -1 15 4.5 Q8.5 10 2 4.5Z" fill="#fff" stroke="#000" stroke-width="1.2"/><circle cx="8.5" cy="4.3" r="2.3" fill="#000"/><rect x="1" y="10" width="15" height="3" fill="#2a7a2a"/><rect x="1" y="12" width="15" height="2" fill="#2050c0"/><rect x="1" y="14" width="15" height="3" fill="#c08020"/></svg>
<svg class="a" style="left:1705px;top:859px" width="17" height="17" viewBox="0 0 17 17"><path d="M2 4.5 Q8.5 -1 15 4.5 Q8.5 10 2 4.5Z" fill="#fff" stroke="#000" stroke-width="1.2"/><circle cx="8.5" cy="4.3" r="2.3" fill="#000"/><path d="M1 1l15 7M16 1L1 8" stroke="#f00" stroke-width="1" stroke-dasharray="2 1"/><rect x="1" y="10" width="15" height="3" fill="#2a7a2a"/><rect x="1" y="12" width="15" height="2" fill="#2050c0"/><rect x="1" y="14" width="15" height="3" fill="#c08020"/></svg>
<div class="a" style="left:1593px;top:888px;width:174px;height:2px;background:#8a8a8a"></div>
<div class="a" style="left:1593px;top:890px;width:174px;height:1px;background:#fff"></div>
<!-- mapframes toolbar -->
<svg class="a" style="left:1582px;top:1000px" width="16" height="12" viewBox="0 0 16 12"><rect x="8" y="5" width="7" height="6" fill="#ff7a00" stroke="#8a3a00" stroke-width=".6"/><path d="M9.5 5V3a2 2 0 0 1 4 0v2" fill="none" stroke="#ff7a00" stroke-width="1.3"/><path d="M1 11h7" stroke="#333"/></svg>
<div class="a" style="left:1607px;top:998px;width:1px;height:14px;background:#909090"></div>
<svg class="a" style="left:1617px;top:1002px" width="14" height="10" viewBox="0 0 14 10"><path d="M7 1l4 4H3z" fill="#ff7a00"/><rect x="0" y="7" width="6" height="3" fill="#ddd" stroke="#333"/></svg>
<svg class="a" style="left:1642px;top:1000px" width="14" height="12" viewBox="0 0 14 12"><path d="M8 1l5 5M13 1l-5 5" stroke="#a0a0a0" stroke-width="1.4"/><rect x="0" y="8" width="6" height="4" fill="#a0a0a0"/></svg>
<div class="a" style="left:1665px;top:998px;width:1px;height:14px;background:#909090"></div>
<svg class="a" style="left:1673px;top:1000px" width="16" height="12" viewBox="0 0 16 12"><path d="M0 0h4L0 3zM16 0h-4l4 3z" fill="#ff7a00"/><path d="M1 7 Q8 0 15 7 Q8 13 1 7Z" fill="#fff" stroke="#000" stroke-width="1.2"/><circle cx="8" cy="7" r="2.3" fill="#000"/></svg>
<svg class="a" style="left:1699px;top:1000px" width="15" height="12" viewBox="0 0 15 12"><rect x="1" y="1" width="13" height="12" fill="#fff" stroke="#ff7a00" stroke-width="1.4"/><path d="M3 3.5h9M3 5.5h9M3 7.5h9M3 9.5h9" stroke="#333" stroke-width=".7"/></svg>

</body></html>
